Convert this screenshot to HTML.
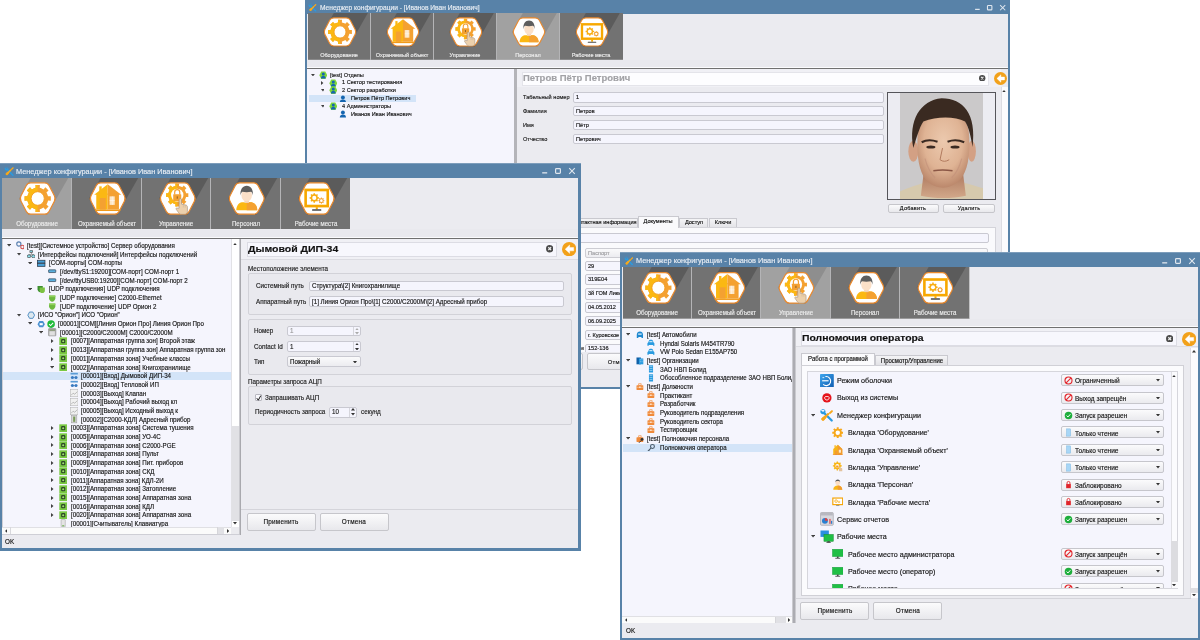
<!DOCTYPE html><html><head><meta charset="utf-8"><title>Менеджер конфигурации</title><style>
*{margin:0;padding:0;box-sizing:border-box}
html,body{width:1200px;height:640px;overflow:hidden;background:#fff}
body{position:relative;font-family:"Liberation Sans", sans-serif}
.t{position:absolute;white-space:nowrap;font-family:"Liberation Sans", sans-serif;-webkit-text-stroke:0.15px currentColor}
.r{position:absolute;display:block}
.win{position:absolute;overflow:hidden}
.fld{position:absolute;background:#f5f5fd;border:1px solid #cbcbd3;border-radius:2px}
.btn{position:absolute;background:linear-gradient(#fbfbfb,#e9e9ec);border:1px solid #c4c4c8;border-radius:2px}
</style></head><body><div id="root" style="position:absolute;left:0;top:0;width:1200px;height:640px;overflow:hidden;will-change:transform;background:#fff"><div class="r" style="left:305px;top:-1px;width:705.3px;height:390px;background:#5882a8;"></div><div class="r" style="left:305px;top:-1px;width:705.3px;height:1px;background:#7d9dbb;"></div><div class="r" style="left:307.3px;top:13.5px;width:700.7px;height:373.2px;background:#ebebf0;"></div><svg class="r" style="left:308.3px;top:3.3px;" width="8.6" height="8.6" viewBox="0 0 12 12" preserveAspectRatio="none"><path d="M2.5,10.5 c-0.8,-0.8 -0.6,-1.6 0.2,-2.2 l5.2,-4.2 l1,1 l-4.2,5.2 c-0.6,0.8 -1.4,1 -2.2,0.2z" fill="#f7a81b"/><path d="M8,4 l2.2,-2.2 c0.4,-0.4 1,-0.3 1.3,0.1 c0.3,0.4 0.2,0.9 -0.2,1.2 l-2.2,2 z" fill="#f7a81b"/><path d="M1.5,1.5 c1,-0.6 2.3,-0.5 3.1,0.3 c0.7,0.7 0.9,1.6 0.6,2.4 l6.2,6.2 c0.4,0.4 0.4,1 0,1.3 c-0.4,0.4 -1,0.4 -1.3,0 l-6.2,-6.2 c-0.8,0.3 -1.8,0.1 -2.4,-0.6 c-0.8,-0.8 -0.9,-2.1 -0.3,-3.1 l1.6,1.6 l1.2,-0.3 l0.3,-1.2 z" fill="#2a9be0"/><path d="M2.5,10.5 c-0.8,-0.8 -0.6,-1.6 0.2,-2.2 l5.2,-4.2 l1,1 l-4.2,5.2 c-0.6,0.8 -1.4,1 -2.2,0.2z" fill="#f7a81b"/></svg><div class="t" style="left:319.7px;top:4.11px;font-size:7.126px;line-height:9.32px;color:#e9eef4;transform:scaleX(0.9346);transform-origin:0 50%;">Менеджер конфигурации - [Иванов Иван Иванович]</div><svg class="r" style="left:999.12px;top:4.22px;" width="7.36" height="7.36" viewBox="0 0 8 8" preserveAspectRatio="none"><path d="M1.2,1.2 L6.8,6.8 M6.8,1.2 L1.2,6.8" stroke="#dfe6ee" stroke-width="1.1"/></svg><svg class="r" style="left:986.24px;top:4.22px;" width="7.36" height="7.36" viewBox="0 0 8 8" preserveAspectRatio="none"><rect x="1.6" y="1.6" width="4.8" height="4.8" rx="0.8" fill="none" stroke="#dfe6ee" stroke-width="1.2"/></svg><svg class="r" style="left:974.28px;top:4.22px;" width="7.36" height="7.36" viewBox="0 0 8 8" preserveAspectRatio="none"><rect x="1.2" y="5.2" width="5" height="1.3" fill="#dfe6ee"/></svg><div class="r" style="left:307.5px;top:13.3px;width:315.0px;height:46.7px;background:#c2c2c4;"></div><svg class="r" style="left:307.5px;top:13.3px;overflow:hidden" width="63.0" height="46.7" viewBox="0 0 63.0 46.7" preserveAspectRatio="none"><rect width="63.0" height="46.7" fill="#727272"/><polygon points="15.0,18.95 95.0,-121.05 103.5,-135.8 120.5,-135.8 129.0,-121.05 49.0,18.95 40.5,33.7 23.5,33.7" fill="#5b5b5b"/><g transform="translate(15.0,4.2) scale(0.85,0.8676)"><path d="M2.21,19.82 Q0.70,17.00 2.21,14.18 L7.89,3.62 Q9.40,0.80 12.60,0.80 L27.40,0.80 Q30.60,0.80 32.11,3.62 L37.79,14.18 Q39.30,17.00 37.79,19.82 L32.11,30.38 Q30.60,33.20 27.40,33.20 L12.60,33.20 Q9.40,33.20 7.89,30.38 Z" fill="#fff" stroke="#ea8a2e" stroke-width="1.3"/><clipPath id="ga0l"><rect x="0" y="0" width="20" height="34"/></clipPath><path d="M30.7,13.71 L30.98,14.81 L34.0,14.64 L34.0,19.36 L30.98,19.19 L30.7,20.29 L29.9,22.24 L29.31,23.22 L31.57,25.23 L28.23,28.57 L26.22,26.31 L25.24,26.9 L23.29,27.7 L22.19,27.98 L22.36,31.0 L17.64,31.0 L17.81,27.98 L16.71,27.7 L14.76,26.9 L13.78,26.31 L11.77,28.57 L8.43,25.23 L10.69,23.22 L10.1,22.24 L9.3,20.29 L9.02,19.19 L6.0,19.36 L6.0,14.64 L9.02,14.81 L9.3,13.71 L10.1,11.76 L10.69,10.78 L8.43,8.77 L11.77,5.43 L13.78,7.69 L14.76,7.1 L16.71,6.3 L17.81,6.02 L17.64,3.0 L22.36,3.0 L22.19,6.02 L23.29,6.3 L25.24,7.1 L26.22,7.69 L28.23,5.43 L31.57,8.77 L29.31,10.78 L29.9,11.76Z" fill="#f4a131"/><path d="M30.7,13.71 L30.98,14.81 L34.0,14.64 L34.0,19.36 L30.98,19.19 L30.7,20.29 L29.9,22.24 L29.31,23.22 L31.57,25.23 L28.23,28.57 L26.22,26.31 L25.24,26.9 L23.29,27.7 L22.19,27.98 L22.36,31.0 L17.64,31.0 L17.81,27.98 L16.71,27.7 L14.76,26.9 L13.78,26.31 L11.77,28.57 L8.43,25.23 L10.69,23.22 L10.1,22.24 L9.3,20.29 L9.02,19.19 L6.0,19.36 L6.0,14.64 L9.02,14.81 L9.3,13.71 L10.1,11.76 L10.69,10.78 L8.43,8.77 L11.77,5.43 L13.78,7.69 L14.76,7.1 L16.71,6.3 L17.81,6.02 L17.64,3.0 L22.36,3.0 L22.19,6.02 L23.29,6.3 L25.24,7.1 L26.22,7.69 L28.23,5.43 L31.57,8.77 L29.31,10.78 L29.9,11.76Z" fill="#fbb813" clip-path="url(#ga0l)"/><circle cx="20" cy="17" r="7" fill="#fff" stroke="#f29a1a" stroke-width="0.9"/></g></svg><div class="t" style="left:139.0px;width:400px;text-align:center;top:51.87px;font-size:5.661px;line-height:7.77px;color:#ececec;transform:scaleX(0.9804);transform-origin:50% 50%;">Оборудование</div><svg class="r" style="left:370.5px;top:13.3px;overflow:hidden" width="63.0" height="46.7" viewBox="0 0 63.0 46.7" preserveAspectRatio="none"><rect width="63.0" height="46.7" fill="#727272"/><polygon points="15.0,18.95 95.0,-121.05 103.5,-135.8 120.5,-135.8 129.0,-121.05 49.0,18.95 40.5,33.7 23.5,33.7" fill="#5b5b5b"/><g transform="translate(15.0,4.2) scale(0.85,0.8676)"><path d="M2.21,19.82 Q0.70,17.00 2.21,14.18 L7.89,3.62 Q9.40,0.80 12.60,0.80 L27.40,0.80 Q30.60,0.80 32.11,3.62 L37.79,14.18 Q39.30,17.00 37.79,19.82 L32.11,30.38 Q30.60,33.20 27.40,33.20 L12.60,33.20 Q9.40,33.20 7.89,30.38 Z" fill="#fff" stroke="#ea8a2e" stroke-width="1.3"/><polygon points="5.5,13.2 20,2.3 20,13.2" fill="#fbb813"/><polygon points="20,2.3 34.5,13.2 20,13.2" fill="#f4a131"/><rect x="11" y="4.5" width="2.6" height="6" fill="#fbb813"/><rect x="7.8" y="12" width="12.2" height="16.3" fill="#fbb813"/><rect x="20" y="12" width="12" height="16.3" fill="#f4a131"/><rect x="11.6" y="16.5" width="6.4" height="11.8" fill="#f4a131"/><rect x="22" y="14.8" width="5.5" height="8.8" fill="#fde6c4"/><rect x="24.5" y="14.8" width="0.5" height="8.8" fill="#fff"/><rect x="22" y="19" width="5.5" height="0.5" fill="#fff"/><rect x="6.5" y="28.3" width="27" height="1.6" fill="#f29a1a"/></g></svg><div class="t" style="left:202.0px;width:400px;text-align:center;top:51.87px;font-size:5.661px;line-height:7.77px;color:#ececec;transform:scaleX(0.9804);transform-origin:50% 50%;">Охраняемый объект</div><svg class="r" style="left:433.5px;top:13.3px;overflow:hidden" width="63.0" height="46.7" viewBox="0 0 63.0 46.7" preserveAspectRatio="none"><rect width="63.0" height="46.7" fill="#727272"/><polygon points="15.0,18.95 95.0,-121.05 103.5,-135.8 120.5,-135.8 129.0,-121.05 49.0,18.95 40.5,33.7 23.5,33.7" fill="#5b5b5b"/><g transform="translate(15.0,4.2) scale(0.85,0.8676)"><path d="M2.21,19.82 Q0.70,17.00 2.21,14.18 L7.89,3.62 Q9.40,0.80 12.60,0.80 L27.40,0.80 Q30.60,0.80 32.11,3.62 L37.79,14.18 Q39.30,17.00 37.79,19.82 L32.11,30.38 Q30.60,33.20 27.40,33.20 L12.60,33.20 Q9.40,33.20 7.89,30.38 Z" fill="#fff" stroke="#ea8a2e" stroke-width="1.3"/><clipPath id="ga2c"><rect x="0" y="0" width="19.5" height="34"/></clipPath><path d="M28.68,10.68 L28.92,11.63 L31.33,11.51 L31.33,15.49 L28.92,15.37 L28.68,16.32 L27.98,17.99 L27.48,18.83 L29.28,20.46 L26.46,23.28 L24.83,21.48 L23.99,21.98 L22.32,22.68 L21.37,22.92 L21.49,25.33 L17.51,25.33 L17.63,22.92 L16.68,22.68 L15.01,21.98 L14.17,21.48 L12.54,23.28 L9.72,20.46 L11.52,18.83 L11.02,17.99 L10.32,16.32 L10.08,15.37 L7.67,15.49 L7.67,11.51 L10.08,11.63 L10.32,10.68 L11.02,9.01 L11.52,8.17 L9.72,6.54 L12.54,3.72 L14.17,5.52 L15.01,5.02 L16.68,4.32 L17.63,4.08 L17.51,1.67 L21.49,1.67 L21.37,4.08 L22.32,4.32 L23.99,5.02 L24.83,5.52 L26.46,3.72 L29.28,6.54 L27.48,8.17 L27.98,9.01Z" fill="#f4a131"/><path d="M28.68,10.68 L28.92,11.63 L31.33,11.51 L31.33,15.49 L28.92,15.37 L28.68,16.32 L27.98,17.99 L27.48,18.83 L29.28,20.46 L26.46,23.28 L24.83,21.48 L23.99,21.98 L22.32,22.68 L21.37,22.92 L21.49,25.33 L17.51,25.33 L17.63,22.92 L16.68,22.68 L15.01,21.98 L14.17,21.48 L12.54,23.28 L9.72,20.46 L11.52,18.83 L11.02,17.99 L10.32,16.32 L10.08,15.37 L7.67,15.49 L7.67,11.51 L10.08,11.63 L10.32,10.68 L11.02,9.01 L11.52,8.17 L9.72,6.54 L12.54,3.72 L14.17,5.52 L15.01,5.02 L16.68,4.32 L17.63,4.08 L17.51,1.67 L21.49,1.67 L21.37,4.08 L22.32,4.32 L23.99,5.02 L24.83,5.52 L26.46,3.72 L29.28,6.54 L27.48,8.17 L27.98,9.01Z" fill="#fbb813" clip-path="url(#ga2c)"/><circle cx="19.5" cy="13.5" r="6.6" fill="#fff"/><path d="M16.8,13 v-2.4 a2.7,2.7 0 0 1 5.4,0 v2.4" fill="none" stroke="#f4a131" stroke-width="1.3"/><rect x="15.2" y="12.6" width="8.6" height="7" rx="0.6" fill="#f4a131"/><rect x="19" y="14.8" width="1" height="2.4" fill="#8a5a20"/><path d="M21.5,27 v-8.6 a1.3,1.3 0 0 1 2.6,0 v4.4 l4.5,0.9 c1.2,0.3 1.8,1 1.8,2.3 v4 c0,2 -1.2,3.3 -3.3,3.3 h-3.3 c-1.3,0 -2.1,-0.6 -2.8,-1.6 l-2.6,-3.6 c-0.6,-0.9 0.4,-1.8 1.3,-1.2 z" fill="#ecd0ac" stroke="#9a8a7a" stroke-width="0.6"/><path d="M26,23.2 v3 M28,23.8 v2.6" stroke="#c8ac8a" stroke-width="0.5"/></g></svg><div class="t" style="left:265.0px;width:400px;text-align:center;top:51.87px;font-size:5.661px;line-height:7.77px;color:#ececec;transform:scaleX(0.9804);transform-origin:50% 50%;">Управление</div><svg class="r" style="left:496.5px;top:13.3px;overflow:hidden" width="63.0" height="46.7" viewBox="0 0 63.0 46.7" preserveAspectRatio="none"><rect width="63.0" height="46.7" fill="#a1a1a1"/><polygon points="15.0,18.95 95.0,-121.05 103.5,-135.8 120.5,-135.8 129.0,-121.05 49.0,18.95 40.5,33.7 23.5,33.7" fill="#8e8e8e"/><g transform="translate(15.0,4.2) scale(0.85,0.8676)"><path d="M2.21,19.82 Q0.70,17.00 2.21,14.18 L7.89,3.62 Q9.40,0.80 12.60,0.80 L27.40,0.80 Q30.60,0.80 32.11,3.62 L37.79,14.18 Q39.30,17.00 37.79,19.82 L32.11,30.38 Q30.60,33.20 27.40,33.20 L12.60,33.20 Q9.40,33.20 7.89,30.38 Z" fill="#fff" stroke="#ea8a2e" stroke-width="1.3"/><path d="M8.9,29 c0,-4.6 2.6,-7.6 6,-8.2 h10.2 c3.4,0.6 6.2,3.6 6.2,8.2 z" fill="#fbb813"/><path d="M20,20.8 h5.1 c3.4,0.6 6.2,3.6 6.2,8.2 h-11.3 z" fill="#f4a131"/><rect x="17.6" y="18" width="4.8" height="3.6" fill="#f3d2b2"/><ellipse cx="20" cy="13.6" rx="5.6" ry="6.6" fill="#fbe0c8"/><path d="M13.4,13.8 c-0.6,-6.4 2.4,-10 6.6,-10 c4.2,0 7.2,3.6 6.6,10 c-0.4,-2.2 -1,-3.4 -2,-3.8 c-2.6,0.6 -6.6,0.6 -9.2,0 c-1,0.4 -1.6,1.6 -2,3.8 z" fill="#5e5e5e"/></g></svg><div class="t" style="left:328.0px;width:400px;text-align:center;top:51.87px;font-size:5.661px;line-height:7.77px;color:#ececec;transform:scaleX(0.9804);transform-origin:50% 50%;">Персонал</div><svg class="r" style="left:559.5px;top:13.3px;overflow:hidden" width="63.0" height="46.7" viewBox="0 0 63.0 46.7" preserveAspectRatio="none"><rect width="63.0" height="46.7" fill="#727272"/><polygon points="15.0,18.95 95.0,-121.05 103.5,-135.8 120.5,-135.8 129.0,-121.05 49.0,18.95 40.5,33.7 23.5,33.7" fill="#5b5b5b"/><g transform="translate(15.0,4.2) scale(0.85,0.8676)"><path d="M2.21,19.82 Q0.70,17.00 2.21,14.18 L7.89,3.62 Q9.40,0.80 12.60,0.80 L27.40,0.80 Q30.60,0.80 32.11,3.62 L37.79,14.18 Q39.30,17.00 37.79,19.82 L32.11,30.38 Q30.60,33.20 27.40,33.20 L12.60,33.20 Q9.40,33.20 7.89,30.38 Z" fill="#fff" stroke="#ea8a2e" stroke-width="1.3"/><rect x="8.2" y="8.2" width="23.6" height="16.6" fill="#fff" stroke="#f7a800" stroke-width="2.8"/><path d="M21.13,15.25 L21.23,15.64 L22.33,15.57 L22.33,17.23 L21.23,17.16 L21.13,17.55 L20.85,18.22 L20.64,18.57 L21.47,19.3 L20.3,20.47 L19.57,19.64 L19.22,19.85 L18.55,20.13 L18.16,20.23 L18.23,21.33 L16.57,21.33 L16.64,20.23 L16.25,20.13 L15.58,19.85 L15.23,19.64 L14.5,20.47 L13.33,19.3 L14.16,18.57 L13.95,18.22 L13.67,17.55 L13.57,17.16 L12.47,17.23 L12.47,15.57 L13.57,15.64 L13.67,15.25 L13.95,14.58 L14.16,14.23 L13.33,13.5 L14.5,12.33 L15.23,13.16 L15.58,12.95 L16.25,12.67 L16.64,12.57 L16.57,11.47 L18.23,11.47 L18.16,12.57 L18.55,12.67 L19.22,12.95 L19.57,13.16 L20.3,12.33 L21.47,13.5 L20.64,14.23 L20.85,14.58Z" fill="#f9ad10"/><circle cx="17.4" cy="16.4" r="2.2" fill="#fff"/><path d="M27.39,18.46 L27.45,18.71 L28.16,18.67 L28.16,19.73 L27.45,19.69 L27.39,19.94 L27.21,20.37 L27.08,20.59 L27.61,21.06 L26.86,21.81 L26.39,21.28 L26.17,21.41 L25.74,21.59 L25.49,21.65 L25.53,22.36 L24.47,22.36 L24.51,21.65 L24.26,21.59 L23.83,21.41 L23.61,21.28 L23.14,21.81 L22.39,21.06 L22.92,20.59 L22.79,20.37 L22.61,19.94 L22.55,19.69 L21.84,19.73 L21.84,18.67 L22.55,18.71 L22.61,18.46 L22.79,18.03 L22.92,17.81 L22.39,17.34 L23.14,16.59 L23.61,17.12 L23.83,16.99 L24.26,16.81 L24.51,16.75 L24.47,16.04 L25.53,16.04 L25.49,16.75 L25.74,16.81 L26.17,16.99 L26.39,17.12 L26.86,16.59 L27.61,17.34 L27.08,17.81 L27.21,18.03Z" fill="#f4a131"/><circle cx="25" cy="19.2" r="1.4" fill="#fff"/><rect x="19" y="26" width="2.2" height="2.2" fill="#f7a800"/><rect x="15" y="28.2" width="10" height="1.4" rx="0.5" fill="#4a4a4a"/></g></svg><div class="t" style="left:391.0px;width:400px;text-align:center;top:51.87px;font-size:5.661px;line-height:7.77px;color:#ececec;transform:scaleX(0.9804);transform-origin:50% 50%;">Рабочие места</div><div class="r" style="left:369.5px;top:13.3px;width:1.0px;height:46.7px;background:#b4b4b6;"></div><div class="r" style="left:432.5px;top:13.3px;width:1.0px;height:46.7px;background:#b4b4b6;"></div><div class="r" style="left:495.5px;top:13.3px;width:1.0px;height:46.7px;background:#b4b4b6;"></div><div class="r" style="left:558.5px;top:13.3px;width:1.0px;height:46.7px;background:#b4b4b6;"></div><div class="r" style="left:307.3px;top:60px;width:700.5px;height:8px;background:#e9e9ee;border-bottom:1px solid #fbfbfd;"></div><div class="r" style="left:307.3px;top:68px;width:700.5px;height:1px;background:#707070;"></div><div class="r" style="left:307.3px;top:69px;width:206.7px;height:319px;background:#f5f5fd;"></div><div class="r" style="left:309px;top:94.6px;width:106.7px;height:7.6px;background:#d3e4f8;"></div><svg class="r" style="left:310.66px;top:73.65px;" width="3.89" height="2.69" viewBox="0 0 5.2 3.6" preserveAspectRatio="none"><polygon points="0,0 5.2,0 2.6,3.2" fill="#404040"/></svg><svg class="r" style="left:318.5px;top:70.7px;" width="8.6" height="8.6" viewBox="0 0 8 8" preserveAspectRatio="none"><polygon points="0.3,4 2.1,0.5 5.9,0.5 7.7,4 5.9,7.5 2.1,7.5" fill="#7ed63a"/><circle cx="4" cy="2.9" r="1.4" fill="#1565b0"/><path d="M1.8,7 c0,-1.8 1,-2.6 2.2,-2.6 c1.2,0 2.2,0.8 2.2,2.6z" fill="#1565b0"/></svg><div class="t" style="left:330.0px;top:71.64px;font-size:5.712px;line-height:7.84px;color:#141414;transform:scaleX(0.9804);transform-origin:0 50%;">[test] Отделы</div><svg class="r" style="left:321.3px;top:80.86px;" width="2.69" height="3.89" viewBox="0 0 3.6 5.2" preserveAspectRatio="none"><polygon points="0,0 3.2,2.6 0,5.2" fill="#404040"/></svg><svg class="r" style="left:328.7px;top:78.5px;" width="8.6" height="8.6" viewBox="0 0 8 8" preserveAspectRatio="none"><polygon points="0.3,4 2.1,0.5 5.9,0.5 7.7,4 5.9,7.5 2.1,7.5" fill="#7ed63a"/><circle cx="4" cy="2.9" r="1.4" fill="#1565b0"/><path d="M1.8,7 c0,-1.8 1,-2.6 2.2,-2.6 c1.2,0 2.2,0.8 2.2,2.6z" fill="#1565b0"/></svg><div class="t" style="left:341.5px;top:79.44px;font-size:5.712px;line-height:7.84px;color:#141414;transform:scaleX(0.9804);transform-origin:0 50%;">1 Сектор тестирования</div><svg class="r" style="left:320.56px;top:89.25px;" width="3.89" height="2.69" viewBox="0 0 5.2 3.6" preserveAspectRatio="none"><polygon points="0,0 5.2,0 2.6,3.2" fill="#404040"/></svg><svg class="r" style="left:328.7px;top:86.3px;" width="8.6" height="8.6" viewBox="0 0 8 8" preserveAspectRatio="none"><polygon points="0.3,4 2.1,0.5 5.9,0.5 7.7,4 5.9,7.5 2.1,7.5" fill="#7ed63a"/><circle cx="4" cy="2.9" r="1.4" fill="#1565b0"/><path d="M1.8,7 c0,-1.8 1,-2.6 2.2,-2.6 c1.2,0 2.2,0.8 2.2,2.6z" fill="#1565b0"/></svg><div class="t" style="left:341.5px;top:87.24px;font-size:5.712px;line-height:7.84px;color:#141414;transform:scaleX(0.9804);transform-origin:0 50%;">2 Сектор разработки</div><svg class="r" style="left:338.7px;top:94.5px;" width="7.8" height="7.8" viewBox="0 0 8 8" preserveAspectRatio="none"><circle cx="4" cy="2.5" r="2" fill="#1565b0"/><path d="M0.8,7.8 c0,-2.4 1.4,-3.2 3.2,-3.2 c1.8,0 3.2,0.8 3.2,3.2z" fill="#1565b0"/></svg><div class="t" style="left:351.2px;top:95.04px;font-size:5.712px;line-height:7.84px;color:#141414;transform:scaleX(0.9804);transform-origin:0 50%;">Петров Пётр Петрович</div><svg class="r" style="left:320.56px;top:104.85px;" width="3.89" height="2.69" viewBox="0 0 5.2 3.6" preserveAspectRatio="none"><polygon points="0,0 5.2,0 2.6,3.2" fill="#404040"/></svg><svg class="r" style="left:328.7px;top:101.9px;" width="8.6" height="8.6" viewBox="0 0 8 8" preserveAspectRatio="none"><polygon points="0.3,4 2.1,0.5 5.9,0.5 7.7,4 5.9,7.5 2.1,7.5" fill="#7ed63a"/><circle cx="4" cy="2.9" r="1.4" fill="#1565b0"/><path d="M1.8,7 c0,-1.8 1,-2.6 2.2,-2.6 c1.2,0 2.2,0.8 2.2,2.6z" fill="#1565b0"/></svg><div class="t" style="left:341.5px;top:102.84px;font-size:5.712px;line-height:7.84px;color:#141414;transform:scaleX(0.9804);transform-origin:0 50%;">4 Администраторы</div><svg class="r" style="left:338.7px;top:110.1px;" width="7.8" height="7.8" viewBox="0 0 8 8" preserveAspectRatio="none"><circle cx="4" cy="2.5" r="2" fill="#1565b0"/><path d="M0.8,7.8 c0,-2.4 1.4,-3.2 3.2,-3.2 c1.8,0 3.2,0.8 3.2,3.2z" fill="#1565b0"/></svg><div class="t" style="left:351.2px;top:110.64px;font-size:5.712px;line-height:7.84px;color:#141414;transform:scaleX(0.9804);transform-origin:0 50%;">Иванов Иван Иванович</div><div class="r" style="left:514px;top:69px;width:2.6px;height:319px;background:#b4b4b9;"></div><div class="r" style="left:516.6px;top:69px;width:491.2px;height:317px;background:#ebebf0;"></div><div class="r" style="left:516.6px;top:69px;width:484.0px;height:18px;background:#f0f0f5;"></div><div class="r" style="left:521.5px;top:71.5px;width:467.5px;height:14.0px;background:#fdfdff;border:1px solid #e4e4ea;"></div><div class="t" style="left:522.8px;top:72.1px;font-size:9.025px;line-height:13.3px;color:#a2a2a6;font-weight:bold;transform:scaleX(1.0526);transform-origin:0 50%;">Петров Пётр Петрович</div><svg class="r" style="left:979.4px;top:74.8px;" width="6.4" height="6.4" viewBox="0 0 10 10" preserveAspectRatio="none"><circle cx="5" cy="5" r="5" fill="#4a4a4a"/><path d="M3.1,3.1 L6.9,6.9 M6.9,3.1 L3.1,6.9" stroke="#f0f0f0" stroke-width="1.6"/></svg><svg class="r" style="left:993.5px;top:71.5px;" width="13.0" height="13.0" viewBox="0 0 20 20" preserveAspectRatio="none"><circle cx="10" cy="10" r="10" fill="#f2a11a"/><path d="M10.6,4.2 L4.4,10 L10.6,15.8 L10.6,12.3 L16.2,12.3 L16.2,7.7 L10.6,7.7 Z" fill="#fff" stroke="#fff" stroke-width="0.6" stroke-linejoin="round"/></svg><div class="r" style="left:1000.6px;top:87.4px;width:7.2px;height:298.6px;background:#fbfbfd;border-left:1px solid #dcdce2;"></div><svg class="r" style="left:1002.2px;top:90px;" width="4" height="2.4" viewBox="0 0 4 2.4" preserveAspectRatio="none"><polygon points="0,2.4 4,2.4 2,0" fill="#333"/></svg><div class="t" style="left:522.5px;top:94.14px;font-size:5.712px;line-height:7.84px;color:#1c1c1c;transform:scaleX(0.9804);transform-origin:0 50%;">Табельный номер</div><div class="r" style="left:573px;top:92.1px;width:310.5px;height:10.6px;background:#f5f5fd;border:1px solid #c9c9d1;border-radius:2px;"></div><div class="t" style="left:576px;top:94.04px;font-size:5.712px;line-height:7.84px;color:#141414;transform:scaleX(0.9804);transform-origin:0 50%;">1</div><div class="t" style="left:522.5px;top:107.94px;font-size:5.712px;line-height:7.84px;color:#1c1c1c;transform:scaleX(0.9804);transform-origin:0 50%;">Фамилия</div><div class="r" style="left:573px;top:105.9px;width:310.5px;height:10.6px;background:#f5f5fd;border:1px solid #c9c9d1;border-radius:2px;"></div><div class="t" style="left:576px;top:107.84px;font-size:5.712px;line-height:7.84px;color:#141414;transform:scaleX(0.9804);transform-origin:0 50%;">Петров</div><div class="t" style="left:522.5px;top:121.84px;font-size:5.712px;line-height:7.84px;color:#1c1c1c;transform:scaleX(0.9804);transform-origin:0 50%;">Имя</div><div class="r" style="left:573px;top:119.8px;width:310.5px;height:10.6px;background:#f5f5fd;border:1px solid #c9c9d1;border-radius:2px;"></div><div class="t" style="left:576px;top:121.74px;font-size:5.712px;line-height:7.84px;color:#141414;transform:scaleX(0.9804);transform-origin:0 50%;">Пётр</div><div class="t" style="left:522.5px;top:135.74px;font-size:5.712px;line-height:7.84px;color:#1c1c1c;transform:scaleX(0.9804);transform-origin:0 50%;">Отчество</div><div class="r" style="left:573px;top:133.7px;width:310.5px;height:10.6px;background:#f5f5fd;border:1px solid #c9c9d1;border-radius:2px;"></div><div class="t" style="left:576px;top:135.64px;font-size:5.712px;line-height:7.84px;color:#141414;transform:scaleX(0.9804);transform-origin:0 50%;">Петрович</div><div class="r" style="left:887.3px;top:92.4px;width:108.5px;height:107.9px;background:#ececf2;border:1px solid #55555a;"></div><svg class="r" style="left:899.8px;top:93.4px;" width="83.4" height="105.9" viewBox="0 0 83.40000000000009 105.9" preserveAspectRatio="none"><defs><radialGradient id="fg" cx="50%" cy="40%" r="62%"><stop offset="0" stop-color="#ecc9ae"/><stop offset="0.6" stop-color="#dfb394"/><stop offset="1" stop-color="#b88468"/></radialGradient><linearGradient id="nk" x1="0" y1="0" x2="0" y2="1"><stop offset="0" stop-color="#a87258"/><stop offset="1" stop-color="#d2a88a"/></linearGradient></defs><rect width="83.40000000000009" height="105.9" fill="#cbc9ca"/><path d="M0,105.9 L0,98.49 C8.34,94.25 18.35,92.13 25.02,88.96 L61.72,88.96 C68.39,91.07 76.73,93.19 83.40000000000009,95.31 L83.40000000000009,105.9 Z" fill="#d6c9ad"/><path d="M24.19,76.25 L62.55,76.25 L65.89,102.72 C51.71,105.9 35.03,105.9 20.85,102.72 Z" fill="url(#nk)"/><ellipse cx="13.34" cy="58.25" rx="5.0" ry="10.59" fill="#d3a084"/><ellipse cx="71.72" cy="58.25" rx="4.17" ry="10.59" fill="#d3a084"/><path d="M17.51,44.48 C17.51,25.42 28.36,16.94 43.37,16.94 C58.38,16.94 69.22,25.42 69.22,44.48 C70.06,63.54 67.55,78.37 60.05,86.84 C53.38,93.19 48.37,94.78 43.37,94.78 C37.53,94.78 31.69,93.19 25.85,86.84 C19.18,78.37 16.68,63.54 17.51,44.48 Z" fill="url(#fg)"/><path d="M13.34,55.07 C8.34,27.53 20.02,7.41 41.7,5.3 C63.38,5.3 76.73,21.18 72.56,54.01 C70.89,44.48 69.22,34.95 65.05,28.59 C55.04,23.3 36.7,23.3 23.35,28.59 C19.18,34.95 16.68,44.48 13.34,55.07 Z" fill="#3a2a21"/><path d="M21.68,49.24 Q28.36,45.54 37.53,48.71" stroke="#3a2a22" stroke-width="2.2" fill="none"/><path d="M47.54,48.71 Q55.88,45.54 64.22,49.24" stroke="#3a2a22" stroke-width="2.2" fill="none"/><ellipse cx="30.86" cy="54.01" rx="4.59" ry="1.59" fill="#3a2a22"/><ellipse cx="55.04" cy="54.01" rx="4.59" ry="1.59" fill="#3a2a22"/><path d="M42.53,55.07 L40.03,66.72 Q44.2,69.89 49.21,66.72" stroke="#b27a5e" stroke-width="1" fill="none"/><path d="M33.36,77.84 Q42.53,76.25 52.54,77.84" stroke="#8a5645" stroke-width="1.5" fill="none"/><path d="M25.02,65.66 Q28.36,78.37 35.03,84.72" stroke="#c2907a" stroke-width="1.2" fill="none" opacity="0.6"/><path d="M61.72,65.66 Q58.38,78.37 51.71,84.72" stroke="#c2907a" stroke-width="1.2" fill="none" opacity="0.6"/></svg><div class="r" style="left:887.5px;top:204.4px;width:51.9px;height:8.6px;background:linear-gradient(#fbfbfc,#e8e8ec);border:1px solid #c6c6cb;border-radius:2px;"></div><div class="t" style="left:713.45px;width:400px;text-align:center;top:205.4px;font-size:5.61px;line-height:7.7px;color:#141414;letter-spacing:0.25px;transform:scaleX(0.9804);transform-origin:50% 50%;">Добавить</div><div class="r" style="left:942.5px;top:204.4px;width:52.5px;height:8.6px;background:linear-gradient(#fbfbfc,#e8e8ec);border:1px solid #c6c6cb;border-radius:2px;"></div><div class="t" style="left:768.75px;width:400px;text-align:center;top:205.4px;font-size:5.61px;line-height:7.7px;color:#141414;letter-spacing:0.25px;transform:scaleX(0.9804);transform-origin:50% 50%;">Удалить</div><div class="r" style="left:516.6px;top:226.5px;width:479.0px;height:159.5px;background:#fafafc;border:1px solid #d4d4da;"></div><div class="r" style="left:540px;top:217.7px;width:97.5px;height:9.3px;background:linear-gradient(#f4f4f6,#e4e4e8);border:1px solid #c9c9cf;border-bottom:none;"></div><div class="t" style="right:563px;top:218.94px;font-size:5.712px;line-height:7.84px;color:#141414;transform:scaleX(0.9804);transform-origin:100% 50%;">Контактная информация</div><div class="r" style="left:638px;top:216px;width:40.5px;height:11.5px;background:#fafafc;border:1px solid #c9c9cf;border-bottom:none;"></div><div class="t" style="left:458.2px;width:400px;text-align:center;top:218.44px;font-size:5.712px;line-height:7.84px;color:#111;transform:scaleX(0.9804);transform-origin:50% 50%;">Документы</div><div class="r" style="left:679px;top:217.7px;width:29.3px;height:9.3px;background:linear-gradient(#f4f4f6,#e4e4e8);border:1px solid #c9c9cf;border-bottom:none;"></div><div class="t" style="left:493.6px;width:400px;text-align:center;top:219.04px;font-size:5.712px;line-height:7.84px;color:#141414;transform:scaleX(0.9804);transform-origin:50% 50%;">Доступ</div><div class="r" style="left:709px;top:217.7px;width:28.3px;height:9.3px;background:linear-gradient(#f4f4f6,#e4e4e8);border:1px solid #c9c9cf;border-bottom:none;"></div><div class="t" style="left:523.2px;width:400px;text-align:center;top:219.04px;font-size:5.712px;line-height:7.84px;color:#141414;transform:scaleX(0.9804);transform-origin:50% 50%;">Ключи</div><div class="r" style="left:560px;top:232.7px;width:428.5px;height:10.3px;background:#f5f5fd;border:1px solid #c9c9d1;border-radius:2px;"></div><div class="r" style="left:584.7px;top:247.7px;width:403.8px;height:10.3px;background:linear-gradient(#fafafb,#ececf0);border:1px solid #cdcdd3;border-radius:2px;"></div><div class="t" style="left:587.5px;top:249.64px;font-size:5.712px;line-height:7.84px;color:#a0a0a4;transform:scaleX(0.9804);transform-origin:0 50%;">Паспорт</div><svg class="r" style="left:982.8px;top:251.5px;" width="3.6" height="2.4" viewBox="0 0 3.6 2.4" preserveAspectRatio="none"><polygon points="0,0 3.6,0 1.8,2.4" fill="#333"/></svg><div class="r" style="left:584.7px;top:260.6px;width:315.3px;height:10.8px;background:#f5f5fd;border:1px solid #c9c9d1;border-radius:2px;"></div><div class="t" style="left:587.7px;top:262.64px;font-size:5.712px;line-height:7.84px;color:#141414;transform:scaleX(0.9804);transform-origin:0 50%;">29</div><div class="r" style="left:584.7px;top:274.2px;width:315.3px;height:11.3px;background:#f5f5fd;border:1px solid #c9c9d1;border-radius:2px;"></div><div class="t" style="left:587.7px;top:276.49px;font-size:5.712px;line-height:7.84px;color:#141414;transform:scaleX(0.9804);transform-origin:0 50%;">319Е04</div><div class="r" style="left:584.7px;top:288px;width:315.3px;height:11.5px;background:#f5f5fd;border:1px solid #c9c9d1;border-radius:2px;"></div><div class="t" style="left:587.7px;top:290.39px;font-size:5.712px;line-height:7.84px;color:#141414;transform:scaleX(0.9804);transform-origin:0 50%;">3й ГОМ Ликино</div><div class="r" style="left:584.7px;top:302.3px;width:315.3px;height:10.7px;background:#f5f5fd;border:1px solid #c9c9d1;border-radius:2px;"></div><div class="t" style="left:587.7px;top:304.29px;font-size:5.712px;line-height:7.84px;color:#141414;transform:scaleX(0.9804);transform-origin:0 50%;">04.05.2012</div><div class="r" style="left:584.7px;top:316.2px;width:315.3px;height:10.2px;background:#f5f5fd;border:1px solid #c9c9d1;border-radius:2px;"></div><div class="t" style="left:587.7px;top:317.94px;font-size:5.712px;line-height:7.84px;color:#141414;transform:scaleX(0.9804);transform-origin:0 50%;">06.09.2025</div><div class="r" style="left:584.7px;top:330px;width:315.3px;height:10.4px;background:#f5f5fd;border:1px solid #c9c9d1;border-radius:2px;"></div><div class="t" style="left:587.7px;top:331.84px;font-size:5.712px;line-height:7.84px;color:#141414;transform:scaleX(0.9804);transform-origin:0 50%;">г. Куровское</div><div class="r" style="left:584.7px;top:343.5px;width:315.3px;height:10.5px;background:#f5f5fd;border:1px solid #c9c9d1;border-radius:2px;"></div><div class="t" style="left:587.7px;top:345.39px;font-size:5.712px;line-height:7.84px;color:#141414;transform:scaleX(0.9804);transform-origin:0 50%;">152-136</div><div class="t" style="left:580.2px;top:344.64px;font-size:5.712px;line-height:7.84px;color:#1c1c1c;transform:scaleX(0.9804);transform-origin:0 50%;">м</div><div class="r" style="left:516.6px;top:351.5px;width:479.0px;height:34.5px;background:#ebebf0;"></div><div class="r" style="left:520px;top:353px;width:63.2px;height:16.5px;background:linear-gradient(#fbfbfc,#e8e8ec);border:1px solid #c6c6cb;border-radius:2px;"></div><div class="t" style="left:351.6px;width:400px;text-align:center;top:357.77px;font-size:5.916px;line-height:8.12px;color:#141414;letter-spacing:0.25px;transform:scaleX(0.9804);transform-origin:50% 50%;">Применить</div><div class="r" style="left:587px;top:353px;width:63px;height:16.5px;background:linear-gradient(#fbfbfc,#e8e8ec);border:1px solid #c6c6cb;border-radius:2px;"></div><div class="t" style="left:418.5px;width:400px;text-align:center;top:357.77px;font-size:5.916px;line-height:8.12px;color:#141414;letter-spacing:0.25px;transform:scaleX(0.9804);transform-origin:50% 50%;">Отмена</div><div class="r" style="left:0px;top:163px;width:580.5px;height:387.5px;background:#5882a8;"></div><div class="r" style="left:0px;top:163px;width:580.5px;height:1px;background:#7d9dbb;"></div><div class="r" style="left:2.3px;top:178px;width:575.9px;height:370.2px;background:#ebebf0;"></div><svg class="r" style="left:4px;top:166px;" width="10" height="10" viewBox="0 0 12 12" preserveAspectRatio="none"><path d="M2.5,10.5 c-0.8,-0.8 -0.6,-1.6 0.2,-2.2 l5.2,-4.2 l1,1 l-4.2,5.2 c-0.6,0.8 -1.4,1 -2.2,0.2z" fill="#f7a81b"/><path d="M8,4 l2.2,-2.2 c0.4,-0.4 1,-0.3 1.3,0.1 c0.3,0.4 0.2,0.9 -0.2,1.2 l-2.2,2 z" fill="#f7a81b"/><path d="M1.5,1.5 c1,-0.6 2.3,-0.5 3.1,0.3 c0.7,0.7 0.9,1.6 0.6,2.4 l6.2,6.2 c0.4,0.4 0.4,1 0,1.3 c-0.4,0.4 -1,0.4 -1.3,0 l-6.2,-6.2 c-0.8,0.3 -1.8,0.1 -2.4,-0.6 c-0.8,-0.8 -0.9,-2.1 -0.3,-3.1 l1.6,1.6 l1.2,-0.3 l0.3,-1.2 z" fill="#2a9be0"/><path d="M2.5,10.5 c-0.8,-0.8 -0.6,-1.6 0.2,-2.2 l5.2,-4.2 l1,1 l-4.2,5.2 c-0.6,0.8 -1.4,1 -2.2,0.2z" fill="#f7a81b"/></svg><div class="t" style="left:16px;top:167.39px;font-size:7.865px;line-height:10.29px;color:#e9eef4;transform:scaleX(0.9346);transform-origin:0 50%;">Менеджер конфигурации - [Иванов Иван Иванович]</div><svg class="r" style="left:567.6px;top:167.3px;" width="8.0" height="8.0" viewBox="0 0 8 8" preserveAspectRatio="none"><path d="M1.2,1.2 L6.8,6.8 M6.8,1.2 L1.2,6.8" stroke="#dfe6ee" stroke-width="1.1"/></svg><svg class="r" style="left:553.6px;top:167.3px;" width="8.0" height="8.0" viewBox="0 0 8 8" preserveAspectRatio="none"><rect x="1.6" y="1.6" width="4.8" height="4.8" rx="0.8" fill="none" stroke="#dfe6ee" stroke-width="1.2"/></svg><svg class="r" style="left:540.6px;top:167.3px;" width="8.0" height="8.0" viewBox="0 0 8 8" preserveAspectRatio="none"><rect x="1.2" y="5.2" width="5" height="1.3" fill="#dfe6ee"/></svg><div class="r" style="left:2.3px;top:178px;width:348.0px;height:51.4px;background:#c2c2c4;"></div><svg class="r" style="left:2.3px;top:178px;overflow:hidden" width="69.6" height="51.4" viewBox="0 0 69.6 51.4" preserveAspectRatio="none"><rect width="69.6" height="51.4" fill="#a1a1a1"/><polygon points="16.95,20.5 26.32,4.0 106.32,-136.0 125.07,-136.0 134.45,-119.5 125.07,-103.0 45.07,37.0 26.32,37.0" fill="#8e8e8e"/><g transform="translate(16.95,4.0) scale(0.9375,0.9706)"><path d="M2.21,19.82 Q0.70,17.00 2.21,14.18 L7.89,3.62 Q9.40,0.80 12.60,0.80 L27.40,0.80 Q30.60,0.80 32.11,3.62 L37.79,14.18 Q39.30,17.00 37.79,19.82 L32.11,30.38 Q30.60,33.20 27.40,33.20 L12.60,33.20 Q9.40,33.20 7.89,30.38 Z" fill="#fff" stroke="#ea8a2e" stroke-width="1.3"/><clipPath id="gb0l"><rect x="0" y="0" width="20" height="34"/></clipPath><path d="M30.7,13.71 L30.98,14.81 L34.0,14.64 L34.0,19.36 L30.98,19.19 L30.7,20.29 L29.9,22.24 L29.31,23.22 L31.57,25.23 L28.23,28.57 L26.22,26.31 L25.24,26.9 L23.29,27.7 L22.19,27.98 L22.36,31.0 L17.64,31.0 L17.81,27.98 L16.71,27.7 L14.76,26.9 L13.78,26.31 L11.77,28.57 L8.43,25.23 L10.69,23.22 L10.1,22.24 L9.3,20.29 L9.02,19.19 L6.0,19.36 L6.0,14.64 L9.02,14.81 L9.3,13.71 L10.1,11.76 L10.69,10.78 L8.43,8.77 L11.77,5.43 L13.78,7.69 L14.76,7.1 L16.71,6.3 L17.81,6.02 L17.64,3.0 L22.36,3.0 L22.19,6.02 L23.29,6.3 L25.24,7.1 L26.22,7.69 L28.23,5.43 L31.57,8.77 L29.31,10.78 L29.9,11.76Z" fill="#f4a131"/><path d="M30.7,13.71 L30.98,14.81 L34.0,14.64 L34.0,19.36 L30.98,19.19 L30.7,20.29 L29.9,22.24 L29.31,23.22 L31.57,25.23 L28.23,28.57 L26.22,26.31 L25.24,26.9 L23.29,27.7 L22.19,27.98 L22.36,31.0 L17.64,31.0 L17.81,27.98 L16.71,27.7 L14.76,26.9 L13.78,26.31 L11.77,28.57 L8.43,25.23 L10.69,23.22 L10.1,22.24 L9.3,20.29 L9.02,19.19 L6.0,19.36 L6.0,14.64 L9.02,14.81 L9.3,13.71 L10.1,11.76 L10.69,10.78 L8.43,8.77 L11.77,5.43 L13.78,7.69 L14.76,7.1 L16.71,6.3 L17.81,6.02 L17.64,3.0 L22.36,3.0 L22.19,6.02 L23.29,6.3 L25.24,7.1 L26.22,7.69 L28.23,5.43 L31.57,8.77 L29.31,10.78 L29.9,11.76Z" fill="#fbb813" clip-path="url(#gb0l)"/><circle cx="20" cy="17" r="7" fill="#fff" stroke="#f29a1a" stroke-width="0.9"/></g></svg><div class="t" style="left:-162.9px;width:400px;text-align:center;top:220.11px;font-size:6.57px;line-height:8.6px;color:#ececec;transform:scaleX(0.9346);transform-origin:50% 50%;">Оборудование</div><svg class="r" style="left:71.9px;top:178px;overflow:hidden" width="69.6" height="51.4" viewBox="0 0 69.6 51.4" preserveAspectRatio="none"><rect width="69.6" height="51.4" fill="#727272"/><polygon points="16.95,20.5 26.32,4.0 106.32,-136.0 125.07,-136.0 134.45,-119.5 125.07,-103.0 45.07,37.0 26.32,37.0" fill="#5b5b5b"/><g transform="translate(16.95,4.0) scale(0.9375,0.9706)"><path d="M2.21,19.82 Q0.70,17.00 2.21,14.18 L7.89,3.62 Q9.40,0.80 12.60,0.80 L27.40,0.80 Q30.60,0.80 32.11,3.62 L37.79,14.18 Q39.30,17.00 37.79,19.82 L32.11,30.38 Q30.60,33.20 27.40,33.20 L12.60,33.20 Q9.40,33.20 7.89,30.38 Z" fill="#fff" stroke="#ea8a2e" stroke-width="1.3"/><polygon points="5.5,13.2 20,2.3 20,13.2" fill="#fbb813"/><polygon points="20,2.3 34.5,13.2 20,13.2" fill="#f4a131"/><rect x="11" y="4.5" width="2.6" height="6" fill="#fbb813"/><rect x="7.8" y="12" width="12.2" height="16.3" fill="#fbb813"/><rect x="20" y="12" width="12" height="16.3" fill="#f4a131"/><rect x="11.6" y="16.5" width="6.4" height="11.8" fill="#f4a131"/><rect x="22" y="14.8" width="5.5" height="8.8" fill="#fde6c4"/><rect x="24.5" y="14.8" width="0.5" height="8.8" fill="#fff"/><rect x="22" y="19" width="5.5" height="0.5" fill="#fff"/><rect x="6.5" y="28.3" width="27" height="1.6" fill="#f29a1a"/></g></svg><div class="t" style="left:-93.3px;width:400px;text-align:center;top:220.11px;font-size:6.57px;line-height:8.6px;color:#ececec;transform:scaleX(0.9346);transform-origin:50% 50%;">Охраняемый объект</div><svg class="r" style="left:141.5px;top:178px;overflow:hidden" width="69.6" height="51.4" viewBox="0 0 69.6 51.4" preserveAspectRatio="none"><rect width="69.6" height="51.4" fill="#727272"/><polygon points="16.95,20.5 26.32,4.0 106.32,-136.0 125.07,-136.0 134.45,-119.5 125.07,-103.0 45.07,37.0 26.32,37.0" fill="#5b5b5b"/><g transform="translate(16.95,4.0) scale(0.9375,0.9706)"><path d="M2.21,19.82 Q0.70,17.00 2.21,14.18 L7.89,3.62 Q9.40,0.80 12.60,0.80 L27.40,0.80 Q30.60,0.80 32.11,3.62 L37.79,14.18 Q39.30,17.00 37.79,19.82 L32.11,30.38 Q30.60,33.20 27.40,33.20 L12.60,33.20 Q9.40,33.20 7.89,30.38 Z" fill="#fff" stroke="#ea8a2e" stroke-width="1.3"/><clipPath id="gb2c"><rect x="0" y="0" width="19.5" height="34"/></clipPath><path d="M28.68,10.68 L28.92,11.63 L31.33,11.51 L31.33,15.49 L28.92,15.37 L28.68,16.32 L27.98,17.99 L27.48,18.83 L29.28,20.46 L26.46,23.28 L24.83,21.48 L23.99,21.98 L22.32,22.68 L21.37,22.92 L21.49,25.33 L17.51,25.33 L17.63,22.92 L16.68,22.68 L15.01,21.98 L14.17,21.48 L12.54,23.28 L9.72,20.46 L11.52,18.83 L11.02,17.99 L10.32,16.32 L10.08,15.37 L7.67,15.49 L7.67,11.51 L10.08,11.63 L10.32,10.68 L11.02,9.01 L11.52,8.17 L9.72,6.54 L12.54,3.72 L14.17,5.52 L15.01,5.02 L16.68,4.32 L17.63,4.08 L17.51,1.67 L21.49,1.67 L21.37,4.08 L22.32,4.32 L23.99,5.02 L24.83,5.52 L26.46,3.72 L29.28,6.54 L27.48,8.17 L27.98,9.01Z" fill="#f4a131"/><path d="M28.68,10.68 L28.92,11.63 L31.33,11.51 L31.33,15.49 L28.92,15.37 L28.68,16.32 L27.98,17.99 L27.48,18.83 L29.28,20.46 L26.46,23.28 L24.83,21.48 L23.99,21.98 L22.32,22.68 L21.37,22.92 L21.49,25.33 L17.51,25.33 L17.63,22.92 L16.68,22.68 L15.01,21.98 L14.17,21.48 L12.54,23.28 L9.72,20.46 L11.52,18.83 L11.02,17.99 L10.32,16.32 L10.08,15.37 L7.67,15.49 L7.67,11.51 L10.08,11.63 L10.32,10.68 L11.02,9.01 L11.52,8.17 L9.72,6.54 L12.54,3.72 L14.17,5.52 L15.01,5.02 L16.68,4.32 L17.63,4.08 L17.51,1.67 L21.49,1.67 L21.37,4.08 L22.32,4.32 L23.99,5.02 L24.83,5.52 L26.46,3.72 L29.28,6.54 L27.48,8.17 L27.98,9.01Z" fill="#fbb813" clip-path="url(#gb2c)"/><circle cx="19.5" cy="13.5" r="6.6" fill="#fff"/><path d="M16.8,13 v-2.4 a2.7,2.7 0 0 1 5.4,0 v2.4" fill="none" stroke="#f4a131" stroke-width="1.3"/><rect x="15.2" y="12.6" width="8.6" height="7" rx="0.6" fill="#f4a131"/><rect x="19" y="14.8" width="1" height="2.4" fill="#8a5a20"/><path d="M21.5,27 v-8.6 a1.3,1.3 0 0 1 2.6,0 v4.4 l4.5,0.9 c1.2,0.3 1.8,1 1.8,2.3 v4 c0,2 -1.2,3.3 -3.3,3.3 h-3.3 c-1.3,0 -2.1,-0.6 -2.8,-1.6 l-2.6,-3.6 c-0.6,-0.9 0.4,-1.8 1.3,-1.2 z" fill="#ecd0ac" stroke="#9a8a7a" stroke-width="0.6"/><path d="M26,23.2 v3 M28,23.8 v2.6" stroke="#c8ac8a" stroke-width="0.5"/></g></svg><div class="t" style="left:-23.7px;width:400px;text-align:center;top:220.11px;font-size:6.57px;line-height:8.6px;color:#ececec;transform:scaleX(0.9346);transform-origin:50% 50%;">Управление</div><svg class="r" style="left:211.1px;top:178px;overflow:hidden" width="69.6" height="51.4" viewBox="0 0 69.6 51.4" preserveAspectRatio="none"><rect width="69.6" height="51.4" fill="#727272"/><polygon points="16.95,20.5 26.32,4.0 106.32,-136.0 125.07,-136.0 134.45,-119.5 125.07,-103.0 45.07,37.0 26.32,37.0" fill="#5b5b5b"/><g transform="translate(16.95,4.0) scale(0.9375,0.9706)"><path d="M2.21,19.82 Q0.70,17.00 2.21,14.18 L7.89,3.62 Q9.40,0.80 12.60,0.80 L27.40,0.80 Q30.60,0.80 32.11,3.62 L37.79,14.18 Q39.30,17.00 37.79,19.82 L32.11,30.38 Q30.60,33.20 27.40,33.20 L12.60,33.20 Q9.40,33.20 7.89,30.38 Z" fill="#fff" stroke="#ea8a2e" stroke-width="1.3"/><path d="M8.9,29 c0,-4.6 2.6,-7.6 6,-8.2 h10.2 c3.4,0.6 6.2,3.6 6.2,8.2 z" fill="#fbb813"/><path d="M20,20.8 h5.1 c3.4,0.6 6.2,3.6 6.2,8.2 h-11.3 z" fill="#f4a131"/><rect x="17.6" y="18" width="4.8" height="3.6" fill="#f3d2b2"/><ellipse cx="20" cy="13.6" rx="5.6" ry="6.6" fill="#fbe0c8"/><path d="M13.4,13.8 c-0.6,-6.4 2.4,-10 6.6,-10 c4.2,0 7.2,3.6 6.6,10 c-0.4,-2.2 -1,-3.4 -2,-3.8 c-2.6,0.6 -6.6,0.6 -9.2,0 c-1,0.4 -1.6,1.6 -2,3.8 z" fill="#5e5e5e"/></g></svg><div class="t" style="left:45.9px;width:400px;text-align:center;top:220.11px;font-size:6.57px;line-height:8.6px;color:#ececec;transform:scaleX(0.9346);transform-origin:50% 50%;">Персонал</div><svg class="r" style="left:280.7px;top:178px;overflow:hidden" width="69.6" height="51.4" viewBox="0 0 69.6 51.4" preserveAspectRatio="none"><rect width="69.6" height="51.4" fill="#727272"/><polygon points="16.95,20.5 26.32,4.0 106.32,-136.0 125.07,-136.0 134.45,-119.5 125.07,-103.0 45.07,37.0 26.32,37.0" fill="#5b5b5b"/><g transform="translate(16.95,4.0) scale(0.9375,0.9706)"><path d="M2.21,19.82 Q0.70,17.00 2.21,14.18 L7.89,3.62 Q9.40,0.80 12.60,0.80 L27.40,0.80 Q30.60,0.80 32.11,3.62 L37.79,14.18 Q39.30,17.00 37.79,19.82 L32.11,30.38 Q30.60,33.20 27.40,33.20 L12.60,33.20 Q9.40,33.20 7.89,30.38 Z" fill="#fff" stroke="#ea8a2e" stroke-width="1.3"/><rect x="8.2" y="8.2" width="23.6" height="16.6" fill="#fff" stroke="#f7a800" stroke-width="2.8"/><path d="M21.13,15.25 L21.23,15.64 L22.33,15.57 L22.33,17.23 L21.23,17.16 L21.13,17.55 L20.85,18.22 L20.64,18.57 L21.47,19.3 L20.3,20.47 L19.57,19.64 L19.22,19.85 L18.55,20.13 L18.16,20.23 L18.23,21.33 L16.57,21.33 L16.64,20.23 L16.25,20.13 L15.58,19.85 L15.23,19.64 L14.5,20.47 L13.33,19.3 L14.16,18.57 L13.95,18.22 L13.67,17.55 L13.57,17.16 L12.47,17.23 L12.47,15.57 L13.57,15.64 L13.67,15.25 L13.95,14.58 L14.16,14.23 L13.33,13.5 L14.5,12.33 L15.23,13.16 L15.58,12.95 L16.25,12.67 L16.64,12.57 L16.57,11.47 L18.23,11.47 L18.16,12.57 L18.55,12.67 L19.22,12.95 L19.57,13.16 L20.3,12.33 L21.47,13.5 L20.64,14.23 L20.85,14.58Z" fill="#f9ad10"/><circle cx="17.4" cy="16.4" r="2.2" fill="#fff"/><path d="M27.39,18.46 L27.45,18.71 L28.16,18.67 L28.16,19.73 L27.45,19.69 L27.39,19.94 L27.21,20.37 L27.08,20.59 L27.61,21.06 L26.86,21.81 L26.39,21.28 L26.17,21.41 L25.74,21.59 L25.49,21.65 L25.53,22.36 L24.47,22.36 L24.51,21.65 L24.26,21.59 L23.83,21.41 L23.61,21.28 L23.14,21.81 L22.39,21.06 L22.92,20.59 L22.79,20.37 L22.61,19.94 L22.55,19.69 L21.84,19.73 L21.84,18.67 L22.55,18.71 L22.61,18.46 L22.79,18.03 L22.92,17.81 L22.39,17.34 L23.14,16.59 L23.61,17.12 L23.83,16.99 L24.26,16.81 L24.51,16.75 L24.47,16.04 L25.53,16.04 L25.49,16.75 L25.74,16.81 L26.17,16.99 L26.39,17.12 L26.86,16.59 L27.61,17.34 L27.08,17.81 L27.21,18.03Z" fill="#f4a131"/><circle cx="25" cy="19.2" r="1.4" fill="#fff"/><rect x="19" y="26" width="2.2" height="2.2" fill="#f7a800"/><rect x="15" y="28.2" width="10" height="1.4" rx="0.5" fill="#4a4a4a"/></g></svg><div class="t" style="left:115.5px;width:400px;text-align:center;top:220.11px;font-size:6.57px;line-height:8.6px;color:#ececec;transform:scaleX(0.9346);transform-origin:50% 50%;">Рабочие места</div><div class="r" style="left:70.9px;top:178px;width:1.0px;height:51.4px;background:#b4b4b6;"></div><div class="r" style="left:140.5px;top:178px;width:1.0px;height:51.4px;background:#b4b4b6;"></div><div class="r" style="left:210.1px;top:178px;width:1.0px;height:51.4px;background:#b4b4b6;"></div><div class="r" style="left:279.7px;top:178px;width:1.0px;height:51.4px;background:#b4b4b6;"></div><div class="r" style="left:2.3px;top:229.4px;width:575.7px;height:8.6px;background:#e9e9ee;border-bottom:1px solid #fbfbfd;"></div><div class="r" style="left:2.3px;top:238px;width:575.7px;height:1.2px;background:#707070;"></div><div class="r" style="left:2.3px;top:239.2px;width:236.5px;height:295.4px;background:#f5f5fd;border:1px solid #cfcfd6;border-top:none;"></div><div class="r" style="left:3px;top:371.65px;width:228.3px;height:8.6px;background:#d3e4f8;"></div><div class="win" style="left:2.3px;top:239.2px;width:229px;height:287.5px"><div class="r" style="left:-2.3px;top:-239.2px;width:1200px;height:640px"><svg class="r" style="left:6.69px;top:244.17px;" width="4.12" height="2.85" viewBox="0 0 5.2 3.6" preserveAspectRatio="none"><polygon points="0,0 5.2,0 2.6,3.2" fill="#404040"/></svg><svg class="r" style="left:15.8px;top:241.4px;" width="8.4" height="8.4" viewBox="0 0 8 8" preserveAspectRatio="none"><circle cx="2.7" cy="2.9" r="2.0" fill="none" stroke="#5a80b0" stroke-width="1.1"/><circle cx="6.1" cy="5.7" r="1.6" fill="none" stroke="#d05050" stroke-width="1.0"/></svg><div class="t" style="left:27.3px;top:241.88px;font-size:6.634px;line-height:8.68px;color:#141414;transform:scaleX(0.9346);transform-origin:0 50%;">[test][Системное устройство] Сервер оборудования</div><svg class="r" style="left:17.49px;top:252.86px;" width="4.12" height="2.85" viewBox="0 0 5.2 3.6" preserveAspectRatio="none"><polygon points="0,0 5.2,0 2.6,3.2" fill="#404040"/></svg><svg class="r" style="left:26.6px;top:250.09px;" width="8.4" height="8.4" viewBox="0 0 8 8" preserveAspectRatio="none"><rect x="2.5" y="0.3" width="3" height="2.2" fill="#333"/><rect x="3" y="0.7" width="2" height="1.2" fill="#7fd0e0"/><rect x="3.8" y="2.5" width="0.5" height="1.3" fill="#555"/><rect x="1.5" y="3.8" width="5" height="0.5" fill="#666"/><ellipse cx="1.9" cy="6" rx="1.7" ry="1.4" fill="#8fe0ee" stroke="#333" stroke-width="0.6"/><ellipse cx="6.1" cy="6" rx="1.7" ry="1.4" fill="#8fe0ee" stroke="#333" stroke-width="0.6"/></svg><div class="t" style="left:38.1px;top:250.57px;font-size:6.634px;line-height:8.68px;color:#141414;transform:scaleX(0.9346);transform-origin:0 50%;">[Интерфейсы подключений] Интерфейсы подключений</div><svg class="r" style="left:28.29px;top:261.55px;" width="4.12" height="2.85" viewBox="0 0 5.2 3.6" preserveAspectRatio="none"><polygon points="0,0 5.2,0 2.6,3.2" fill="#404040"/></svg><svg class="r" style="left:37.4px;top:258.78px;" width="8.4" height="8.4" viewBox="0 0 8 8" preserveAspectRatio="none"><rect x="0.4" y="1.2" width="7.2" height="2.6" fill="#4aa0d8" stroke="#2a3a4a" stroke-width="0.7"/><rect x="0.4" y="4.4" width="7.2" height="2.6" fill="#4aa0d8" stroke="#2a3a4a" stroke-width="0.7"/></svg><div class="t" style="left:48.9px;top:259.26px;font-size:6.634px;line-height:8.68px;color:#141414;transform:scaleX(0.9346);transform-origin:0 50%;">[COM-порты] COM-порты</div><svg class="r" style="left:48.2px;top:267.47px;" width="8.4" height="8.4" viewBox="0 0 8 8" preserveAspectRatio="none"><rect x="0.6" y="2.7" width="6.8" height="2.6" rx="0.4" fill="#5ab0e0" stroke="#3a4a5a" stroke-width="0.7"/></svg><div class="t" style="left:59.7px;top:267.95px;font-size:6.634px;line-height:8.68px;color:#141414;transform:scaleX(0.9346);transform-origin:0 50%;">[/dev/ttyS1:19200][COM-порт] COM-порт 1</div><svg class="r" style="left:48.2px;top:276.16px;" width="8.4" height="8.4" viewBox="0 0 8 8" preserveAspectRatio="none"><rect x="0.6" y="2.7" width="6.8" height="2.6" rx="0.4" fill="#5ab0e0" stroke="#3a4a5a" stroke-width="0.7"/></svg><div class="t" style="left:59.7px;top:276.64px;font-size:6.634px;line-height:8.68px;color:#141414;transform:scaleX(0.9346);transform-origin:0 50%;">[/dev/ttyUSB0:19200][COM-порт] COM-порт 2</div><svg class="r" style="left:28.29px;top:287.62px;" width="4.12" height="2.85" viewBox="0 0 5.2 3.6" preserveAspectRatio="none"><polygon points="0,0 5.2,0 2.6,3.2" fill="#404040"/></svg><svg class="r" style="left:37.4px;top:284.85px;" width="8.4" height="8.4" viewBox="0 0 8 8" preserveAspectRatio="none"><path d="M0.5,1 h5 v3 c0,1.5 -1.2,2.5 -2.5,3 c-1.3,-0.5 -2.5,-1.5 -2.5,-3z" fill="#3d8f30"/><path d="M2.5,2.5 h5 v3 c0,1.3 -1.2,2.2 -2.5,2.5 c-1.3,-0.3 -2.5,-1.2 -2.5,-2.5z" fill="#7cc242"/></svg><div class="t" style="left:48.9px;top:285.33px;font-size:6.634px;line-height:8.68px;color:#141414;transform:scaleX(0.9346);transform-origin:0 50%;">[UDP подключения] UDP подключения</div><svg class="r" style="left:48.2px;top:293.54px;" width="8.4" height="8.4" viewBox="0 0 8 8" preserveAspectRatio="none"><path d="M1,1.5 h6 v2.5 c0,1.8 -1.5,3 -3,3.5 c-1.5,-0.5 -3,-1.7 -3,-3.5z" fill="#6db83f"/><rect x="1" y="1.5" width="6" height="1.5" fill="#8fd05a"/></svg><div class="t" style="left:59.7px;top:294.02px;font-size:6.634px;line-height:8.68px;color:#141414;transform:scaleX(0.9346);transform-origin:0 50%;">[UDP подключение] C2000-Ethernet</div><svg class="r" style="left:48.2px;top:302.23px;" width="8.4" height="8.4" viewBox="0 0 8 8" preserveAspectRatio="none"><path d="M1,1.5 h6 v2.5 c0,1.8 -1.5,3 -3,3.5 c-1.5,-0.5 -3,-1.7 -3,-3.5z" fill="#6db83f"/><rect x="1" y="1.5" width="6" height="1.5" fill="#8fd05a"/></svg><div class="t" style="left:59.7px;top:302.71px;font-size:6.634px;line-height:8.68px;color:#141414;transform:scaleX(0.9346);transform-origin:0 50%;">[UDP подключение] UDP Орион 2</div><svg class="r" style="left:17.49px;top:313.69px;" width="4.12" height="2.85" viewBox="0 0 5.2 3.6" preserveAspectRatio="none"><polygon points="0,0 5.2,0 2.6,3.2" fill="#404040"/></svg><svg class="r" style="left:26.6px;top:310.92px;" width="8.4" height="8.4" viewBox="0 0 8 8" preserveAspectRatio="none"><polygon points="0.8,4 2.4,1 5.6,1 7.2,4 5.6,7 2.4,7" fill="#dde8f0" stroke="#4a8ac0" stroke-width="0.9"/></svg><div class="t" style="left:38.1px;top:311.4px;font-size:6.634px;line-height:8.68px;color:#141414;transform:scaleX(0.9346);transform-origin:0 50%;">[ИСО "Орион"] ИСО "Орион"</div><svg class="r" style="left:28.29px;top:322.38px;" width="4.12" height="2.85" viewBox="0 0 5.2 3.6" preserveAspectRatio="none"><polygon points="0,0 5.2,0 2.6,3.2" fill="#404040"/></svg><svg class="r" style="left:37.4px;top:319.61px;" width="8.4" height="8.4" viewBox="0 0 8 8" preserveAspectRatio="none"><polygon points="0.5,4 2.2,1 5.8,1 7.5,4 5.8,7 2.2,7" fill="#4a90d0"/><rect x="2.5" y="3" width="3" height="2" fill="#fff"/></svg><svg class="r" style="left:46.7px;top:319.71px;" width="8.2" height="8.2" viewBox="0 0 8 8" preserveAspectRatio="none"><circle cx="4" cy="4" r="3.7" fill="#1fba3a"/><path d="M2.1,4.1 L3.5,5.5 L6,2.8" stroke="#fff" stroke-width="1" fill="none"/></svg><div class="t" style="left:57.5px;top:320.09px;font-size:6.634px;line-height:8.68px;color:#141414;transform:scaleX(0.9346);transform-origin:0 50%;">[00001][COM][Линия Орион Про] Линия Орион Про</div><svg class="r" style="left:39.09px;top:331.07px;" width="4.12" height="2.85" viewBox="0 0 5.2 3.6" preserveAspectRatio="none"><polygon points="0,0 5.2,0 2.6,3.2" fill="#404040"/></svg><svg class="r" style="left:48.2px;top:328.3px;" width="8.4" height="8.4" viewBox="0 0 8 8" preserveAspectRatio="none"><rect x="0.5" y="0.5" width="7" height="7" rx="0.6" fill="#b8b8b8" stroke="#7a7a7a" stroke-width="0.5"/><rect x="1.2" y="1.2" width="5.6" height="1.5" fill="#8a9a7a"/><rect x="1.5" y="3.2" width="5" height="3.8" fill="#e0e0e0"/></svg><div class="t" style="left:59.7px;top:328.78px;font-size:6.634px;line-height:8.68px;color:#141414;transform:scaleX(0.9346);transform-origin:0 50%;">[00001][C2000/C2000M] C2000/C2000M</div><svg class="r" style="left:50.68px;top:339.13px;" width="2.85" height="4.12" viewBox="0 0 3.6 5.2" preserveAspectRatio="none"><polygon points="0,0 3.2,2.6 0,5.2" fill="#404040"/></svg><svg class="r" style="left:59.0px;top:336.99px;" width="8.4" height="8.4" viewBox="0 0 8 8" preserveAspectRatio="none"><rect x="0.3" y="0.3" width="7.4" height="7.4" fill="#7ac943"/><rect x="2" y="2" width="4" height="4" rx="1" fill="#2f4a28"/><circle cx="4" cy="4" r="1" fill="#9fe070"/></svg><div class="t" style="left:70.5px;top:337.47px;font-size:6.634px;line-height:8.68px;color:#141414;transform:scaleX(0.9346);transform-origin:0 50%;">[0007][Аппаратная группа зон] Второй этаж</div><svg class="r" style="left:50.68px;top:347.82px;" width="2.85" height="4.12" viewBox="0 0 3.6 5.2" preserveAspectRatio="none"><polygon points="0,0 3.2,2.6 0,5.2" fill="#404040"/></svg><svg class="r" style="left:59.0px;top:345.68px;" width="8.4" height="8.4" viewBox="0 0 8 8" preserveAspectRatio="none"><rect x="0.3" y="0.3" width="7.4" height="7.4" fill="#7ac943"/><rect x="2" y="2" width="4" height="4" rx="1" fill="#2f4a28"/><circle cx="4" cy="4" r="1" fill="#9fe070"/></svg><div class="t" style="left:70.5px;top:346.16px;font-size:6.634px;line-height:8.68px;color:#141414;transform:scaleX(0.9346);transform-origin:0 50%;">[0013][Аппаратная группа зон] Аппаратная группа зон</div><svg class="r" style="left:50.68px;top:356.51px;" width="2.85" height="4.12" viewBox="0 0 3.6 5.2" preserveAspectRatio="none"><polygon points="0,0 3.2,2.6 0,5.2" fill="#404040"/></svg><svg class="r" style="left:59.0px;top:354.37px;" width="8.4" height="8.4" viewBox="0 0 8 8" preserveAspectRatio="none"><rect x="0.3" y="0.3" width="7.4" height="7.4" fill="#7ac943"/><rect x="2" y="2" width="4" height="4" rx="1" fill="#2f4a28"/><circle cx="4" cy="4" r="1" fill="#9fe070"/></svg><div class="t" style="left:70.5px;top:354.85px;font-size:6.634px;line-height:8.68px;color:#141414;transform:scaleX(0.9346);transform-origin:0 50%;">[0001][Аппаратная зона] Учебные классы</div><svg class="r" style="left:49.89px;top:365.83px;" width="4.12" height="2.85" viewBox="0 0 5.2 3.6" preserveAspectRatio="none"><polygon points="0,0 5.2,0 2.6,3.2" fill="#404040"/></svg><svg class="r" style="left:59.0px;top:363.06px;" width="8.4" height="8.4" viewBox="0 0 8 8" preserveAspectRatio="none"><rect x="0.3" y="0.3" width="7.4" height="7.4" fill="#7ac943"/><rect x="2" y="2" width="4" height="4" rx="1" fill="#2f4a28"/><circle cx="4" cy="4" r="1" fill="#9fe070"/></svg><div class="t" style="left:70.5px;top:363.54px;font-size:6.634px;line-height:8.68px;color:#141414;transform:scaleX(0.9346);transform-origin:0 50%;">[0002][Аппаратная зона] Книгохранилище</div><svg class="r" style="left:69.8px;top:371.75px;" width="8.4" height="8.4" viewBox="0 0 8 8" preserveAspectRatio="none"><rect x="0.5" y="0.8" width="7" height="1.6" fill="#5a9bd5"/><circle cx="2.3" cy="5.2" r="1.5" fill="#3a7bc0"/><circle cx="5.7" cy="5.2" r="1.5" fill="#3a7bc0"/><rect x="2.2" y="5" width="3.6" height="0.5" fill="#3a7bc0"/></svg><div class="t" style="left:81.3px;top:372.23px;font-size:6.634px;line-height:8.68px;color:#141414;transform:scaleX(0.9346);transform-origin:0 50%;">[00001][Вход] Дымовой ДИП-34</div><svg class="r" style="left:69.8px;top:380.44px;" width="8.4" height="8.4" viewBox="0 0 8 8" preserveAspectRatio="none"><rect x="0.5" y="0.8" width="7" height="1.6" fill="#5a9bd5"/><circle cx="2.3" cy="5.2" r="1.5" fill="#3a7bc0"/><circle cx="5.7" cy="5.2" r="1.5" fill="#3a7bc0"/><rect x="2.2" y="5" width="3.6" height="0.5" fill="#3a7bc0"/></svg><div class="t" style="left:81.3px;top:380.92px;font-size:6.634px;line-height:8.68px;color:#141414;transform:scaleX(0.9346);transform-origin:0 50%;">[00002][Вход] Тепловой ИП</div><svg class="r" style="left:69.8px;top:389.13px;" width="8.4" height="8.4" viewBox="0 0 8 8" preserveAspectRatio="none"><rect x="0.4" y="0.6" width="7.2" height="6.8" fill="#f0f0f0" stroke="#b0b0b0" stroke-width="0.5"/><path d="M1,6 L3,4 L4.5,5 L7,2.5" stroke="#9a9a9a" stroke-width="0.6" fill="none"/></svg><div class="t" style="left:81.3px;top:389.61px;font-size:6.634px;line-height:8.68px;color:#141414;transform:scaleX(0.9346);transform-origin:0 50%;">[00003][Выход] Клапан</div><svg class="r" style="left:69.8px;top:397.82px;" width="8.4" height="8.4" viewBox="0 0 8 8" preserveAspectRatio="none"><rect x="0.4" y="0.6" width="7.2" height="6.8" fill="#f0f0f0" stroke="#b0b0b0" stroke-width="0.5"/><path d="M1,6 L3,4 L4.5,5 L7,2.5" stroke="#9a9a9a" stroke-width="0.6" fill="none"/></svg><div class="t" style="left:81.3px;top:398.3px;font-size:6.634px;line-height:8.68px;color:#141414;transform:scaleX(0.9346);transform-origin:0 50%;">[00004][Выход] Рабочий выход кл</div><svg class="r" style="left:69.8px;top:406.51px;" width="8.4" height="8.4" viewBox="0 0 8 8" preserveAspectRatio="none"><rect x="0.4" y="0.6" width="7.2" height="6.8" fill="#f0f0f0" stroke="#b0b0b0" stroke-width="0.5"/><path d="M1,6 L3,4 L4.5,5 L7,2.5" stroke="#9a9a9a" stroke-width="0.6" fill="none"/></svg><div class="t" style="left:81.3px;top:406.99px;font-size:6.634px;line-height:8.68px;color:#141414;transform:scaleX(0.9346);transform-origin:0 50%;">[00005][Выход] Исходный выход к</div><svg class="r" style="left:69.8px;top:415.2px;" width="8.4" height="8.4" viewBox="0 0 8 8" preserveAspectRatio="none"><rect x="1.5" y="0.5" width="5" height="7" fill="#d8d8d8" stroke="#9a9a9a" stroke-width="0.5"/><rect x="3" y="1.5" width="2" height="5" fill="#7a9a5a"/></svg><div class="t" style="left:81.3px;top:415.68px;font-size:6.634px;line-height:8.68px;color:#141414;transform:scaleX(0.9346);transform-origin:0 50%;">[00002][С2000-КДЛ] Адресный прибор</div><svg class="r" style="left:50.68px;top:426.03px;" width="2.85" height="4.12" viewBox="0 0 3.6 5.2" preserveAspectRatio="none"><polygon points="0,0 3.2,2.6 0,5.2" fill="#404040"/></svg><svg class="r" style="left:59.0px;top:423.89px;" width="8.4" height="8.4" viewBox="0 0 8 8" preserveAspectRatio="none"><rect x="0.3" y="0.3" width="7.4" height="7.4" fill="#7ac943"/><rect x="2" y="2" width="4" height="4" rx="1" fill="#2f4a28"/><circle cx="4" cy="4" r="1" fill="#9fe070"/></svg><div class="t" style="left:70.5px;top:424.37px;font-size:6.634px;line-height:8.68px;color:#141414;transform:scaleX(0.9346);transform-origin:0 50%;">[0003][Аппаратная зона] Система тушения</div><svg class="r" style="left:50.68px;top:434.72px;" width="2.85" height="4.12" viewBox="0 0 3.6 5.2" preserveAspectRatio="none"><polygon points="0,0 3.2,2.6 0,5.2" fill="#404040"/></svg><svg class="r" style="left:59.0px;top:432.58px;" width="8.4" height="8.4" viewBox="0 0 8 8" preserveAspectRatio="none"><rect x="0.3" y="0.3" width="7.4" height="7.4" fill="#7ac943"/><rect x="2" y="2" width="4" height="4" rx="1" fill="#2f4a28"/><circle cx="4" cy="4" r="1" fill="#9fe070"/></svg><div class="t" style="left:70.5px;top:433.06px;font-size:6.634px;line-height:8.68px;color:#141414;transform:scaleX(0.9346);transform-origin:0 50%;">[0005][Аппаратная зона] УО-4С</div><svg class="r" style="left:50.68px;top:443.41px;" width="2.85" height="4.12" viewBox="0 0 3.6 5.2" preserveAspectRatio="none"><polygon points="0,0 3.2,2.6 0,5.2" fill="#404040"/></svg><svg class="r" style="left:59.0px;top:441.27px;" width="8.4" height="8.4" viewBox="0 0 8 8" preserveAspectRatio="none"><rect x="0.3" y="0.3" width="7.4" height="7.4" fill="#7ac943"/><rect x="2" y="2" width="4" height="4" rx="1" fill="#2f4a28"/><circle cx="4" cy="4" r="1" fill="#9fe070"/></svg><div class="t" style="left:70.5px;top:441.75px;font-size:6.634px;line-height:8.68px;color:#141414;transform:scaleX(0.9346);transform-origin:0 50%;">[0006][Аппаратная зона] С2000-PGE</div><svg class="r" style="left:50.68px;top:452.1px;" width="2.85" height="4.12" viewBox="0 0 3.6 5.2" preserveAspectRatio="none"><polygon points="0,0 3.2,2.6 0,5.2" fill="#404040"/></svg><svg class="r" style="left:59.0px;top:449.96px;" width="8.4" height="8.4" viewBox="0 0 8 8" preserveAspectRatio="none"><rect x="0.3" y="0.3" width="7.4" height="7.4" fill="#7ac943"/><rect x="2" y="2" width="4" height="4" rx="1" fill="#2f4a28"/><circle cx="4" cy="4" r="1" fill="#9fe070"/></svg><div class="t" style="left:70.5px;top:450.44px;font-size:6.634px;line-height:8.68px;color:#141414;transform:scaleX(0.9346);transform-origin:0 50%;">[0008][Аппаратная зона] Пульт</div><svg class="r" style="left:50.68px;top:460.79px;" width="2.85" height="4.12" viewBox="0 0 3.6 5.2" preserveAspectRatio="none"><polygon points="0,0 3.2,2.6 0,5.2" fill="#404040"/></svg><svg class="r" style="left:59.0px;top:458.65px;" width="8.4" height="8.4" viewBox="0 0 8 8" preserveAspectRatio="none"><rect x="0.3" y="0.3" width="7.4" height="7.4" fill="#7ac943"/><rect x="2" y="2" width="4" height="4" rx="1" fill="#2f4a28"/><circle cx="4" cy="4" r="1" fill="#9fe070"/></svg><div class="t" style="left:70.5px;top:459.13px;font-size:6.634px;line-height:8.68px;color:#141414;transform:scaleX(0.9346);transform-origin:0 50%;">[0009][Аппаратная зона] Пит. приборов</div><svg class="r" style="left:50.68px;top:469.48px;" width="2.85" height="4.12" viewBox="0 0 3.6 5.2" preserveAspectRatio="none"><polygon points="0,0 3.2,2.6 0,5.2" fill="#404040"/></svg><svg class="r" style="left:59.0px;top:467.34px;" width="8.4" height="8.4" viewBox="0 0 8 8" preserveAspectRatio="none"><rect x="0.3" y="0.3" width="7.4" height="7.4" fill="#7ac943"/><rect x="2" y="2" width="4" height="4" rx="1" fill="#2f4a28"/><circle cx="4" cy="4" r="1" fill="#9fe070"/></svg><div class="t" style="left:70.5px;top:467.82px;font-size:6.634px;line-height:8.68px;color:#141414;transform:scaleX(0.9346);transform-origin:0 50%;">[0010][Аппаратная зона] СКД</div><svg class="r" style="left:50.68px;top:478.17px;" width="2.85" height="4.12" viewBox="0 0 3.6 5.2" preserveAspectRatio="none"><polygon points="0,0 3.2,2.6 0,5.2" fill="#404040"/></svg><svg class="r" style="left:59.0px;top:476.03px;" width="8.4" height="8.4" viewBox="0 0 8 8" preserveAspectRatio="none"><rect x="0.3" y="0.3" width="7.4" height="7.4" fill="#7ac943"/><rect x="2" y="2" width="4" height="4" rx="1" fill="#2f4a28"/><circle cx="4" cy="4" r="1" fill="#9fe070"/></svg><div class="t" style="left:70.5px;top:476.51px;font-size:6.634px;line-height:8.68px;color:#141414;transform:scaleX(0.9346);transform-origin:0 50%;">[0011][Аппаратная зона] КДЛ-2И</div><svg class="r" style="left:50.68px;top:486.86px;" width="2.85" height="4.12" viewBox="0 0 3.6 5.2" preserveAspectRatio="none"><polygon points="0,0 3.2,2.6 0,5.2" fill="#404040"/></svg><svg class="r" style="left:59.0px;top:484.72px;" width="8.4" height="8.4" viewBox="0 0 8 8" preserveAspectRatio="none"><rect x="0.3" y="0.3" width="7.4" height="7.4" fill="#7ac943"/><rect x="2" y="2" width="4" height="4" rx="1" fill="#2f4a28"/><circle cx="4" cy="4" r="1" fill="#9fe070"/></svg><div class="t" style="left:70.5px;top:485.2px;font-size:6.634px;line-height:8.68px;color:#141414;transform:scaleX(0.9346);transform-origin:0 50%;">[0012][Аппаратная зона] Затопление</div><svg class="r" style="left:50.68px;top:495.55px;" width="2.85" height="4.12" viewBox="0 0 3.6 5.2" preserveAspectRatio="none"><polygon points="0,0 3.2,2.6 0,5.2" fill="#404040"/></svg><svg class="r" style="left:59.0px;top:493.41px;" width="8.4" height="8.4" viewBox="0 0 8 8" preserveAspectRatio="none"><rect x="0.3" y="0.3" width="7.4" height="7.4" fill="#7ac943"/><rect x="2" y="2" width="4" height="4" rx="1" fill="#2f4a28"/><circle cx="4" cy="4" r="1" fill="#9fe070"/></svg><div class="t" style="left:70.5px;top:493.89px;font-size:6.634px;line-height:8.68px;color:#141414;transform:scaleX(0.9346);transform-origin:0 50%;">[0015][Аппаратная зона] Аппаратная зона</div><svg class="r" style="left:50.68px;top:504.24px;" width="2.85" height="4.12" viewBox="0 0 3.6 5.2" preserveAspectRatio="none"><polygon points="0,0 3.2,2.6 0,5.2" fill="#404040"/></svg><svg class="r" style="left:59.0px;top:502.1px;" width="8.4" height="8.4" viewBox="0 0 8 8" preserveAspectRatio="none"><rect x="0.3" y="0.3" width="7.4" height="7.4" fill="#7ac943"/><rect x="2" y="2" width="4" height="4" rx="1" fill="#2f4a28"/><circle cx="4" cy="4" r="1" fill="#9fe070"/></svg><div class="t" style="left:70.5px;top:502.58px;font-size:6.634px;line-height:8.68px;color:#141414;transform:scaleX(0.9346);transform-origin:0 50%;">[0016][Аппаратная зона] КДЛ</div><svg class="r" style="left:50.68px;top:512.93px;" width="2.85" height="4.12" viewBox="0 0 3.6 5.2" preserveAspectRatio="none"><polygon points="0,0 3.2,2.6 0,5.2" fill="#404040"/></svg><svg class="r" style="left:59.0px;top:510.79px;" width="8.4" height="8.4" viewBox="0 0 8 8" preserveAspectRatio="none"><rect x="0.3" y="0.3" width="7.4" height="7.4" fill="#7ac943"/><rect x="2" y="2" width="4" height="4" rx="1" fill="#2f4a28"/><circle cx="4" cy="4" r="1" fill="#9fe070"/></svg><div class="t" style="left:70.5px;top:511.27px;font-size:6.634px;line-height:8.68px;color:#141414;transform:scaleX(0.9346);transform-origin:0 50%;">[0020][Аппаратная зона] Аппаратная зона</div><svg class="r" style="left:59.0px;top:519.48px;" width="8.4" height="8.4" viewBox="0 0 8 8" preserveAspectRatio="none"><rect x="2" y="0.5" width="4" height="7" rx="0.5" fill="#e4e4e4" stroke="#a0a0a0" stroke-width="0.5"/><rect x="3" y="6" width="2" height="1" fill="#6ab04c"/></svg><div class="t" style="left:70.5px;top:519.96px;font-size:6.634px;line-height:8.68px;color:#141414;transform:scaleX(0.9346);transform-origin:0 50%;">[00001][Считыватель] Клавиатура</div></div></div><div class="r" style="left:231.3px;top:239.2px;width:7.5px;height:287.6px;background:#ffffff;border-left:1px solid #e2e2e6;"></div><div class="r" style="left:231.6px;top:426px;width:7.2px;height:94px;background:#e1e1e5;"></div><svg class="r" style="left:233.1px;top:242.5px;" width="4" height="2.4" viewBox="0 0 4 2.4" preserveAspectRatio="none"><polygon points="0,2.4 4,2.4 2,0" fill="#333"/></svg><div class="r" style="left:231.3px;top:520px;width:7.5px;height:6.8px;background:#fff;border-left:1px solid #e2e2e6;border-top:1px solid #e0e0e4;"></div><svg class="r" style="left:233.1px;top:522.3px;" width="4" height="2.4" viewBox="0 0 4 2.4" preserveAspectRatio="none"><polygon points="0,0 4,0 2,2.4" fill="#333"/></svg><div class="r" style="left:2.3px;top:526.8px;width:229.0px;height:7.6px;background:#fbfbfb;border-top:1px solid #e0e0e4;"></div><div class="r" style="left:9.8px;top:526.8px;width:0.8px;height:7.6px;background:#d8d8dc;"></div><div class="r" style="left:216.8px;top:527.4px;width:7.2px;height:7.0px;background:#e1e1e5;border-left:1px solid #d6d6da;"></div><svg class="r" style="left:4.8px;top:528.6px;" width="2.4" height="4" viewBox="0 0 2.4 4" preserveAspectRatio="none"><polygon points="2.4,0 2.4,4 0,2" fill="#333"/></svg><svg class="r" style="left:226.6px;top:528.6px;" width="2.4" height="4" viewBox="0 0 2.4 4" preserveAspectRatio="none"><polygon points="0,0 0,4 2.4,2" fill="#333"/></svg><div class="r" style="left:231.3px;top:526.8px;width:7.5px;height:7.6px;background:#ebebef;"></div><div class="r" style="left:238.8px;top:239.2px;width:2.4px;height:295.4px;background:#c9c9ce;"></div><div class="r" style="left:239.6px;top:239.2px;width:1.0px;height:295.4px;background:#a9a9ae;"></div><div class="t" style="left:5.3px;top:537.72px;font-size:6.741px;line-height:8.82px;color:#141414;transform:scaleX(0.9346);transform-origin:0 50%;">OK</div><div class="r" style="left:241.2px;top:239.2px;width:336.8px;height:269.8px;background:#ebebf0;"></div><div class="r" style="left:241.2px;top:239.2px;width:336.8px;height:20.8px;background:#f0f0f5;border-bottom:1px solid #dcdce2;"></div><div class="r" style="left:246.9px;top:241.9px;width:310.4px;height:15.4px;background:#f7f7fd;border:1px solid #dcdce4;"></div><div class="t" style="left:248.3px;top:242.3px;font-size:9.975px;line-height:14.7px;color:#111;font-weight:bold;transform:scaleX(1.0526);transform-origin:0 50%;">Дымовой ДИП-34</div><svg class="r" style="left:546.1px;top:245.4px;" width="7.4" height="7.4" viewBox="0 0 10 10" preserveAspectRatio="none"><circle cx="5" cy="5" r="5" fill="#4a4a4a"/><path d="M3.1,3.1 L6.9,6.9 M6.9,3.1 L3.1,6.9" stroke="#f0f0f0" stroke-width="1.6"/></svg><svg class="r" style="left:562.0px;top:242.1px;" width="14.4" height="14.4" viewBox="0 0 20 20" preserveAspectRatio="none"><circle cx="10" cy="10" r="10" fill="#f2a11a"/><path d="M10.6,4.2 L4.4,10 L10.6,15.8 L10.6,12.3 L16.2,12.3 L16.2,7.7 L10.6,7.7 Z" fill="#fff" stroke="#fff" stroke-width="0.6" stroke-linejoin="round"/></svg><div class="t" style="left:247.6px;top:264.52px;font-size:6.741px;line-height:8.82px;color:#1c1c1c;transform:scaleX(0.9346);transform-origin:0 50%;">Местоположение элемента</div><div class="r" style="left:247.6px;top:272.5px;width:324.1px;height:42.1px;background:#e9e9ee;border:1px solid #d2d2d8;border-radius:2px;"></div><div class="t" style="left:255.5px;top:282.22px;font-size:6.741px;line-height:8.82px;color:#1c1c1c;transform:scaleX(0.9346);transform-origin:0 50%;">Системный путь</div><div class="r" style="left:308.7px;top:280.6px;width:255.3px;height:10.9px;background:#f5f5fd;border:1px solid #c9c9d1;border-radius:2px;"></div><div class="t" style="left:311.7px;top:282.33px;font-size:6.634px;line-height:8.68px;color:#141414;transform:scaleX(0.9346);transform-origin:0 50%;">Структура\[2] Книгохранилище</div><div class="t" style="left:255.5px;top:297.82px;font-size:6.741px;line-height:8.82px;color:#1c1c1c;transform:scaleX(0.9346);transform-origin:0 50%;">Аппаратный путь</div><div class="r" style="left:308.7px;top:296px;width:255.3px;height:11px;background:#f5f5fd;border:1px solid #c9c9d1;border-radius:2px;"></div><div class="t" style="left:311.7px;top:297.78px;font-size:6.634px;line-height:8.68px;color:#141414;transform:scaleX(0.9346);transform-origin:0 50%;">[1] Линия Орион Про\[1] С2000/С2000М\[2] Адресный прибор</div><div class="r" style="left:247.6px;top:318.5px;width:324.1px;height:56.1px;background:#e9e9ee;border:1px solid #d2d2d8;border-radius:2px;"></div><div class="t" style="left:254px;top:327.22px;font-size:6.741px;line-height:8.82px;color:#1c1c1c;transform:scaleX(0.9346);transform-origin:0 50%;">Номер</div><div class="r" style="left:287px;top:325.7px;width:74px;height:10.8px;background:#f5f5fd;border:1px solid #c9c9d1;border-radius:2px;"></div><div class="r" style="left:353px;top:326.7px;width:0.7px;height:8.8px;background:#d6d6dc;"></div><svg class="r" style="left:354.8px;top:327.5px;" width="4" height="2.6" viewBox="0 0 4 2.6" preserveAspectRatio="none"><polygon points="0,2.6 4,2.6 2,0" fill="#aaa"/></svg><svg class="r" style="left:354.8px;top:332.1px;" width="4" height="2.6" viewBox="0 0 4 2.6" preserveAspectRatio="none"><polygon points="0,0 4,0 2,2.6" fill="#aaa"/></svg><div class="t" style="left:290px;top:327.38px;font-size:6.634px;line-height:8.68px;color:#9a9a9a;transform:scaleX(0.9346);transform-origin:0 50%;">1</div><div class="t" style="left:254px;top:342.92px;font-size:6.741px;line-height:8.82px;color:#1c1c1c;transform:scaleX(0.9346);transform-origin:0 50%;">Contact Id</div><div class="r" style="left:287px;top:341px;width:74px;height:11px;background:#f5f5fd;border:1px solid #c9c9d1;border-radius:2px;"></div><div class="r" style="left:353px;top:342px;width:0.7px;height:9px;background:#d6d6dc;"></div><svg class="r" style="left:354.8px;top:342.8px;" width="4" height="2.6" viewBox="0 0 4 2.6" preserveAspectRatio="none"><polygon points="0,2.6 4,2.6 2,0" fill="#333"/></svg><svg class="r" style="left:354.8px;top:347.6px;" width="4" height="2.6" viewBox="0 0 4 2.6" preserveAspectRatio="none"><polygon points="0,0 4,0 2,2.6" fill="#333"/></svg><div class="t" style="left:290px;top:342.78px;font-size:6.634px;line-height:8.68px;color:#222;transform:scaleX(0.9346);transform-origin:0 50%;">1</div><div class="t" style="left:254px;top:358.22px;font-size:6.741px;line-height:8.82px;color:#1c1c1c;transform:scaleX(0.9346);transform-origin:0 50%;">Тип</div><div class="r" style="left:287px;top:356.3px;width:74px;height:11.2px;background:linear-gradient(#fafafb,#ececf0);border:1px solid #c9c9d1;border-radius:2px;"></div><div class="t" style="left:290px;top:358.28px;font-size:6.634px;line-height:8.68px;color:#141414;transform:scaleX(0.9346);transform-origin:0 50%;">Пожарный</div><svg class="r" style="left:353px;top:360.8px;" width="4" height="2.6" viewBox="0 0 4 2.6" preserveAspectRatio="none"><polygon points="0,0 4,0 2,2.6" fill="#333"/></svg><div class="t" style="left:247.6px;top:377.72px;font-size:6.741px;line-height:8.82px;color:#1c1c1c;transform:scaleX(0.9346);transform-origin:0 50%;">Параметры запроса АЦП</div><div class="r" style="left:247.6px;top:385.7px;width:324.1px;height:39.8px;background:#e9e9ee;border:1px solid #d2d2d8;border-radius:2px;"></div><div class="r" style="left:255.4px;top:394.3px;width:6.6px;height:6.9px;background:#f8f8fc;border:1px solid #b8b8c0;border-radius:1px;"></div><svg class="r" style="left:256.2px;top:394.6px;" width="5.5" height="6" viewBox="0 0 5.5 6" preserveAspectRatio="none"><path d="M0.8,3.2 L2.3,5.2 L4.8,0.6" stroke="#111" stroke-width="1" fill="none"/></svg><div class="t" style="left:265.4px;top:394.02px;font-size:6.741px;line-height:8.82px;color:#1c1c1c;transform:scaleX(0.9346);transform-origin:0 50%;">Запрашивать АЦП</div><div class="t" style="left:255px;top:408.12px;font-size:6.741px;line-height:8.82px;color:#1c1c1c;transform:scaleX(0.9346);transform-origin:0 50%;">Периодичность запроса</div><div class="r" style="left:329px;top:406.5px;width:27.7px;height:11.0px;background:#f5f5fd;border:1px solid #c9c9d1;border-radius:2px;"></div><div class="r" style="left:348.7px;top:407.5px;width:0.7px;height:9.0px;background:#d6d6dc;"></div><svg class="r" style="left:350.5px;top:408.3px;" width="4" height="2.6" viewBox="0 0 4 2.6" preserveAspectRatio="none"><polygon points="0,2.6 4,2.6 2,0" fill="#333"/></svg><svg class="r" style="left:350.5px;top:413.1px;" width="4" height="2.6" viewBox="0 0 4 2.6" preserveAspectRatio="none"><polygon points="0,0 4,0 2,2.6" fill="#333"/></svg><div class="t" style="left:332px;top:408.28px;font-size:6.634px;line-height:8.68px;color:#222;transform:scaleX(0.9346);transform-origin:0 50%;">10</div><div class="t" style="left:360.6px;top:408.12px;font-size:6.741px;line-height:8.82px;color:#1c1c1c;transform:scaleX(0.9346);transform-origin:0 50%;">секунд</div><div class="r" style="left:241.2px;top:508.6px;width:336.8px;height:0.8px;background:#d4d4da;"></div><div class="r" style="left:246.5px;top:512.6px;width:69.1px;height:18.0px;background:linear-gradient(#fbfbfc,#e8e8ec);border:1px solid #c6c6cb;border-radius:2px;"></div><div class="t" style="left:81.05px;width:400px;text-align:center;top:517.76px;font-size:6.848px;line-height:8.96px;color:#141414;letter-spacing:0.25px;transform:scaleX(0.9346);transform-origin:50% 50%;">Применить</div><div class="r" style="left:319.5px;top:512.6px;width:69.0px;height:18.0px;background:linear-gradient(#fbfbfc,#e8e8ec);border:1px solid #c6c6cb;border-radius:2px;"></div><div class="t" style="left:154.0px;width:400px;text-align:center;top:517.76px;font-size:6.848px;line-height:8.96px;color:#141414;letter-spacing:0.25px;transform:scaleX(0.9346);transform-origin:50% 50%;">Отмена</div><div class="r" style="left:619.5px;top:252.3px;width:581.0px;height:388.2px;background:#5882a8;"></div><div class="r" style="left:619.5px;top:252.3px;width:581.0px;height:1.0px;background:#7d9dbb;"></div><div class="r" style="left:622.0px;top:267.0px;width:576.0px;height:371.0px;background:#ebebf0;"></div><svg class="r" style="left:623.8px;top:255.8px;" width="9.4" height="9.4" viewBox="0 0 12 12" preserveAspectRatio="none"><path d="M2.5,10.5 c-0.8,-0.8 -0.6,-1.6 0.2,-2.2 l5.2,-4.2 l1,1 l-4.2,5.2 c-0.6,0.8 -1.4,1 -2.2,0.2z" fill="#f7a81b"/><path d="M8,4 l2.2,-2.2 c0.4,-0.4 1,-0.3 1.3,0.1 c0.3,0.4 0.2,0.9 -0.2,1.2 l-2.2,2 z" fill="#f7a81b"/><path d="M1.5,1.5 c1,-0.6 2.3,-0.5 3.1,0.3 c0.7,0.7 0.9,1.6 0.6,2.4 l6.2,6.2 c0.4,0.4 0.4,1 0,1.3 c-0.4,0.4 -1,0.4 -1.3,0 l-6.2,-6.2 c-0.8,0.3 -1.8,0.1 -2.4,-0.6 c-0.8,-0.8 -0.9,-2.1 -0.3,-3.1 l1.6,1.6 l1.2,-0.3 l0.3,-1.2 z" fill="#2a9be0"/><path d="M2.5,10.5 c-0.8,-0.8 -0.6,-1.6 0.2,-2.2 l5.2,-4.2 l1,1 l-4.2,5.2 c-0.6,0.8 -1.4,1 -2.2,0.2z" fill="#f7a81b"/></svg><div class="t" style="left:636px;top:256.39px;font-size:7.865px;line-height:10.29px;color:#e9eef4;transform:scaleX(0.9346);transform-origin:0 50%;">Менеджер конфигурации - [Иванов Иван Иванович]</div><svg class="r" style="left:1187.6px;top:256.6px;" width="8.0" height="8.0" viewBox="0 0 8 8" preserveAspectRatio="none"><path d="M1.2,1.2 L6.8,6.8 M6.8,1.2 L1.2,6.8" stroke="#dfe6ee" stroke-width="1.1"/></svg><svg class="r" style="left:1173.6px;top:256.6px;" width="8.0" height="8.0" viewBox="0 0 8 8" preserveAspectRatio="none"><rect x="1.6" y="1.6" width="4.8" height="4.8" rx="0.8" fill="none" stroke="#dfe6ee" stroke-width="1.2"/></svg><svg class="r" style="left:1160.6px;top:256.6px;" width="8.0" height="8.0" viewBox="0 0 8 8" preserveAspectRatio="none"><rect x="1.2" y="5.2" width="5" height="1.3" fill="#dfe6ee"/></svg><div class="r" style="left:622.5px;top:267px;width:347.0px;height:51.5px;background:#c2c2c4;"></div><svg class="r" style="left:622.5px;top:267px;overflow:hidden" width="69.4" height="51.5" viewBox="0 0 69.4 51.5" preserveAspectRatio="none"><rect width="69.4" height="51.5" fill="#727272"/><polygon points="16.75,20.8 96.75,-119.2 106.08,-135.2 124.73,-135.2 134.05,-119.2 54.05,20.8 44.73,36.8 26.08,36.8" fill="#5b5b5b"/><g transform="translate(16.75,4.8) scale(0.9325,0.9412)"><path d="M2.21,19.82 Q0.70,17.00 2.21,14.18 L7.89,3.62 Q9.40,0.80 12.60,0.80 L27.40,0.80 Q30.60,0.80 32.11,3.62 L37.79,14.18 Q39.30,17.00 37.79,19.82 L32.11,30.38 Q30.60,33.20 27.40,33.20 L12.60,33.20 Q9.40,33.20 7.89,30.38 Z" fill="#fff" stroke="#ea8a2e" stroke-width="1.3"/><clipPath id="gc0l"><rect x="0" y="0" width="20" height="34"/></clipPath><path d="M30.7,13.71 L30.98,14.81 L34.0,14.64 L34.0,19.36 L30.98,19.19 L30.7,20.29 L29.9,22.24 L29.31,23.22 L31.57,25.23 L28.23,28.57 L26.22,26.31 L25.24,26.9 L23.29,27.7 L22.19,27.98 L22.36,31.0 L17.64,31.0 L17.81,27.98 L16.71,27.7 L14.76,26.9 L13.78,26.31 L11.77,28.57 L8.43,25.23 L10.69,23.22 L10.1,22.24 L9.3,20.29 L9.02,19.19 L6.0,19.36 L6.0,14.64 L9.02,14.81 L9.3,13.71 L10.1,11.76 L10.69,10.78 L8.43,8.77 L11.77,5.43 L13.78,7.69 L14.76,7.1 L16.71,6.3 L17.81,6.02 L17.64,3.0 L22.36,3.0 L22.19,6.02 L23.29,6.3 L25.24,7.1 L26.22,7.69 L28.23,5.43 L31.57,8.77 L29.31,10.78 L29.9,11.76Z" fill="#f4a131"/><path d="M30.7,13.71 L30.98,14.81 L34.0,14.64 L34.0,19.36 L30.98,19.19 L30.7,20.29 L29.9,22.24 L29.31,23.22 L31.57,25.23 L28.23,28.57 L26.22,26.31 L25.24,26.9 L23.29,27.7 L22.19,27.98 L22.36,31.0 L17.64,31.0 L17.81,27.98 L16.71,27.7 L14.76,26.9 L13.78,26.31 L11.77,28.57 L8.43,25.23 L10.69,23.22 L10.1,22.24 L9.3,20.29 L9.02,19.19 L6.0,19.36 L6.0,14.64 L9.02,14.81 L9.3,13.71 L10.1,11.76 L10.69,10.78 L8.43,8.77 L11.77,5.43 L13.78,7.69 L14.76,7.1 L16.71,6.3 L17.81,6.02 L17.64,3.0 L22.36,3.0 L22.19,6.02 L23.29,6.3 L25.24,7.1 L26.22,7.69 L28.23,5.43 L31.57,8.77 L29.31,10.78 L29.9,11.76Z" fill="#fbb813" clip-path="url(#gc0l)"/><circle cx="20" cy="17" r="7" fill="#fff" stroke="#f29a1a" stroke-width="0.9"/></g></svg><div class="t" style="left:457.2px;width:400px;text-align:center;top:309.11px;font-size:6.57px;line-height:8.6px;color:#ececec;transform:scaleX(0.9346);transform-origin:50% 50%;">Оборудование</div><svg class="r" style="left:691.9px;top:267px;overflow:hidden" width="69.4" height="51.5" viewBox="0 0 69.4 51.5" preserveAspectRatio="none"><rect width="69.4" height="51.5" fill="#727272"/><polygon points="16.75,20.8 96.75,-119.2 106.08,-135.2 124.73,-135.2 134.05,-119.2 54.05,20.8 44.73,36.8 26.08,36.8" fill="#5b5b5b"/><g transform="translate(16.75,4.8) scale(0.9325,0.9412)"><path d="M2.21,19.82 Q0.70,17.00 2.21,14.18 L7.89,3.62 Q9.40,0.80 12.60,0.80 L27.40,0.80 Q30.60,0.80 32.11,3.62 L37.79,14.18 Q39.30,17.00 37.79,19.82 L32.11,30.38 Q30.60,33.20 27.40,33.20 L12.60,33.20 Q9.40,33.20 7.89,30.38 Z" fill="#fff" stroke="#ea8a2e" stroke-width="1.3"/><polygon points="5.5,13.2 20,2.3 20,13.2" fill="#fbb813"/><polygon points="20,2.3 34.5,13.2 20,13.2" fill="#f4a131"/><rect x="11" y="4.5" width="2.6" height="6" fill="#fbb813"/><rect x="7.8" y="12" width="12.2" height="16.3" fill="#fbb813"/><rect x="20" y="12" width="12" height="16.3" fill="#f4a131"/><rect x="11.6" y="16.5" width="6.4" height="11.8" fill="#f4a131"/><rect x="22" y="14.8" width="5.5" height="8.8" fill="#fde6c4"/><rect x="24.5" y="14.8" width="0.5" height="8.8" fill="#fff"/><rect x="22" y="19" width="5.5" height="0.5" fill="#fff"/><rect x="6.5" y="28.3" width="27" height="1.6" fill="#f29a1a"/></g></svg><div class="t" style="left:526.6px;width:400px;text-align:center;top:309.11px;font-size:6.57px;line-height:8.6px;color:#ececec;transform:scaleX(0.9346);transform-origin:50% 50%;">Охраняемый объект</div><svg class="r" style="left:761.3px;top:267px;overflow:hidden" width="69.4" height="51.5" viewBox="0 0 69.4 51.5" preserveAspectRatio="none"><rect width="69.4" height="51.5" fill="#a1a1a1"/><polygon points="16.75,20.8 96.75,-119.2 106.08,-135.2 124.73,-135.2 134.05,-119.2 54.05,20.8 44.73,36.8 26.08,36.8" fill="#8e8e8e"/><g transform="translate(16.75,4.8) scale(0.9325,0.9412)"><path d="M2.21,19.82 Q0.70,17.00 2.21,14.18 L7.89,3.62 Q9.40,0.80 12.60,0.80 L27.40,0.80 Q30.60,0.80 32.11,3.62 L37.79,14.18 Q39.30,17.00 37.79,19.82 L32.11,30.38 Q30.60,33.20 27.40,33.20 L12.60,33.20 Q9.40,33.20 7.89,30.38 Z" fill="#fff" stroke="#ea8a2e" stroke-width="1.3"/><clipPath id="gc2c"><rect x="0" y="0" width="19.5" height="34"/></clipPath><path d="M28.68,10.68 L28.92,11.63 L31.33,11.51 L31.33,15.49 L28.92,15.37 L28.68,16.32 L27.98,17.99 L27.48,18.83 L29.28,20.46 L26.46,23.28 L24.83,21.48 L23.99,21.98 L22.32,22.68 L21.37,22.92 L21.49,25.33 L17.51,25.33 L17.63,22.92 L16.68,22.68 L15.01,21.98 L14.17,21.48 L12.54,23.28 L9.72,20.46 L11.52,18.83 L11.02,17.99 L10.32,16.32 L10.08,15.37 L7.67,15.49 L7.67,11.51 L10.08,11.63 L10.32,10.68 L11.02,9.01 L11.52,8.17 L9.72,6.54 L12.54,3.72 L14.17,5.52 L15.01,5.02 L16.68,4.32 L17.63,4.08 L17.51,1.67 L21.49,1.67 L21.37,4.08 L22.32,4.32 L23.99,5.02 L24.83,5.52 L26.46,3.72 L29.28,6.54 L27.48,8.17 L27.98,9.01Z" fill="#f4a131"/><path d="M28.68,10.68 L28.92,11.63 L31.33,11.51 L31.33,15.49 L28.92,15.37 L28.68,16.32 L27.98,17.99 L27.48,18.83 L29.28,20.46 L26.46,23.28 L24.83,21.48 L23.99,21.98 L22.32,22.68 L21.37,22.92 L21.49,25.33 L17.51,25.33 L17.63,22.92 L16.68,22.68 L15.01,21.98 L14.17,21.48 L12.54,23.28 L9.72,20.46 L11.52,18.83 L11.02,17.99 L10.32,16.32 L10.08,15.37 L7.67,15.49 L7.67,11.51 L10.08,11.63 L10.32,10.68 L11.02,9.01 L11.52,8.17 L9.72,6.54 L12.54,3.72 L14.17,5.52 L15.01,5.02 L16.68,4.32 L17.63,4.08 L17.51,1.67 L21.49,1.67 L21.37,4.08 L22.32,4.32 L23.99,5.02 L24.83,5.52 L26.46,3.72 L29.28,6.54 L27.48,8.17 L27.98,9.01Z" fill="#fbb813" clip-path="url(#gc2c)"/><circle cx="19.5" cy="13.5" r="6.6" fill="#fff"/><path d="M16.8,13 v-2.4 a2.7,2.7 0 0 1 5.4,0 v2.4" fill="none" stroke="#f4a131" stroke-width="1.3"/><rect x="15.2" y="12.6" width="8.6" height="7" rx="0.6" fill="#f4a131"/><rect x="19" y="14.8" width="1" height="2.4" fill="#8a5a20"/><path d="M21.5,27 v-8.6 a1.3,1.3 0 0 1 2.6,0 v4.4 l4.5,0.9 c1.2,0.3 1.8,1 1.8,2.3 v4 c0,2 -1.2,3.3 -3.3,3.3 h-3.3 c-1.3,0 -2.1,-0.6 -2.8,-1.6 l-2.6,-3.6 c-0.6,-0.9 0.4,-1.8 1.3,-1.2 z" fill="#ecd0ac" stroke="#9a8a7a" stroke-width="0.6"/><path d="M26,23.2 v3 M28,23.8 v2.6" stroke="#c8ac8a" stroke-width="0.5"/></g></svg><div class="t" style="left:596.0px;width:400px;text-align:center;top:309.11px;font-size:6.57px;line-height:8.6px;color:#ececec;transform:scaleX(0.9346);transform-origin:50% 50%;">Управление</div><svg class="r" style="left:830.7px;top:267px;overflow:hidden" width="69.4" height="51.5" viewBox="0 0 69.4 51.5" preserveAspectRatio="none"><rect width="69.4" height="51.5" fill="#727272"/><polygon points="16.75,20.8 96.75,-119.2 106.08,-135.2 124.73,-135.2 134.05,-119.2 54.05,20.8 44.73,36.8 26.08,36.8" fill="#5b5b5b"/><g transform="translate(16.75,4.8) scale(0.9325,0.9412)"><path d="M2.21,19.82 Q0.70,17.00 2.21,14.18 L7.89,3.62 Q9.40,0.80 12.60,0.80 L27.40,0.80 Q30.60,0.80 32.11,3.62 L37.79,14.18 Q39.30,17.00 37.79,19.82 L32.11,30.38 Q30.60,33.20 27.40,33.20 L12.60,33.20 Q9.40,33.20 7.89,30.38 Z" fill="#fff" stroke="#ea8a2e" stroke-width="1.3"/><path d="M8.9,29 c0,-4.6 2.6,-7.6 6,-8.2 h10.2 c3.4,0.6 6.2,3.6 6.2,8.2 z" fill="#fbb813"/><path d="M20,20.8 h5.1 c3.4,0.6 6.2,3.6 6.2,8.2 h-11.3 z" fill="#f4a131"/><rect x="17.6" y="18" width="4.8" height="3.6" fill="#f3d2b2"/><ellipse cx="20" cy="13.6" rx="5.6" ry="6.6" fill="#fbe0c8"/><path d="M13.4,13.8 c-0.6,-6.4 2.4,-10 6.6,-10 c4.2,0 7.2,3.6 6.6,10 c-0.4,-2.2 -1,-3.4 -2,-3.8 c-2.6,0.6 -6.6,0.6 -9.2,0 c-1,0.4 -1.6,1.6 -2,3.8 z" fill="#5e5e5e"/></g></svg><div class="t" style="left:665.4px;width:400px;text-align:center;top:309.11px;font-size:6.57px;line-height:8.6px;color:#ececec;transform:scaleX(0.9346);transform-origin:50% 50%;">Персонал</div><svg class="r" style="left:900.1px;top:267px;overflow:hidden" width="69.4" height="51.5" viewBox="0 0 69.4 51.5" preserveAspectRatio="none"><rect width="69.4" height="51.5" fill="#727272"/><polygon points="16.75,20.8 96.75,-119.2 106.08,-135.2 124.73,-135.2 134.05,-119.2 54.05,20.8 44.73,36.8 26.08,36.8" fill="#5b5b5b"/><g transform="translate(16.75,4.8) scale(0.9325,0.9412)"><path d="M2.21,19.82 Q0.70,17.00 2.21,14.18 L7.89,3.62 Q9.40,0.80 12.60,0.80 L27.40,0.80 Q30.60,0.80 32.11,3.62 L37.79,14.18 Q39.30,17.00 37.79,19.82 L32.11,30.38 Q30.60,33.20 27.40,33.20 L12.60,33.20 Q9.40,33.20 7.89,30.38 Z" fill="#fff" stroke="#ea8a2e" stroke-width="1.3"/><rect x="8.2" y="8.2" width="23.6" height="16.6" fill="#fff" stroke="#f7a800" stroke-width="2.8"/><path d="M21.13,15.25 L21.23,15.64 L22.33,15.57 L22.33,17.23 L21.23,17.16 L21.13,17.55 L20.85,18.22 L20.64,18.57 L21.47,19.3 L20.3,20.47 L19.57,19.64 L19.22,19.85 L18.55,20.13 L18.16,20.23 L18.23,21.33 L16.57,21.33 L16.64,20.23 L16.25,20.13 L15.58,19.85 L15.23,19.64 L14.5,20.47 L13.33,19.3 L14.16,18.57 L13.95,18.22 L13.67,17.55 L13.57,17.16 L12.47,17.23 L12.47,15.57 L13.57,15.64 L13.67,15.25 L13.95,14.58 L14.16,14.23 L13.33,13.5 L14.5,12.33 L15.23,13.16 L15.58,12.95 L16.25,12.67 L16.64,12.57 L16.57,11.47 L18.23,11.47 L18.16,12.57 L18.55,12.67 L19.22,12.95 L19.57,13.16 L20.3,12.33 L21.47,13.5 L20.64,14.23 L20.85,14.58Z" fill="#f9ad10"/><circle cx="17.4" cy="16.4" r="2.2" fill="#fff"/><path d="M27.39,18.46 L27.45,18.71 L28.16,18.67 L28.16,19.73 L27.45,19.69 L27.39,19.94 L27.21,20.37 L27.08,20.59 L27.61,21.06 L26.86,21.81 L26.39,21.28 L26.17,21.41 L25.74,21.59 L25.49,21.65 L25.53,22.36 L24.47,22.36 L24.51,21.65 L24.26,21.59 L23.83,21.41 L23.61,21.28 L23.14,21.81 L22.39,21.06 L22.92,20.59 L22.79,20.37 L22.61,19.94 L22.55,19.69 L21.84,19.73 L21.84,18.67 L22.55,18.71 L22.61,18.46 L22.79,18.03 L22.92,17.81 L22.39,17.34 L23.14,16.59 L23.61,17.12 L23.83,16.99 L24.26,16.81 L24.51,16.75 L24.47,16.04 L25.53,16.04 L25.49,16.75 L25.74,16.81 L26.17,16.99 L26.39,17.12 L26.86,16.59 L27.61,17.34 L27.08,17.81 L27.21,18.03Z" fill="#f4a131"/><circle cx="25" cy="19.2" r="1.4" fill="#fff"/><rect x="19" y="26" width="2.2" height="2.2" fill="#f7a800"/><rect x="15" y="28.2" width="10" height="1.4" rx="0.5" fill="#4a4a4a"/></g></svg><div class="t" style="left:734.8px;width:400px;text-align:center;top:309.11px;font-size:6.57px;line-height:8.6px;color:#ececec;transform:scaleX(0.9346);transform-origin:50% 50%;">Рабочие места</div><div class="r" style="left:690.9px;top:267px;width:1.0px;height:51.5px;background:#b4b4b6;"></div><div class="r" style="left:760.3px;top:267px;width:1.0px;height:51.5px;background:#b4b4b6;"></div><div class="r" style="left:829.7px;top:267px;width:1.0px;height:51.5px;background:#b4b4b6;"></div><div class="r" style="left:899.1px;top:267px;width:1.0px;height:51.5px;background:#b4b4b6;"></div><div class="r" style="left:622px;top:318.5px;width:576px;height:8.3px;background:#e9e9ee;border-bottom:1px solid #fbfbfd;"></div><div class="r" style="left:622px;top:326.8px;width:576px;height:1.2px;background:#707070;"></div><div class="r" style="left:622px;top:328px;width:170px;height:295.3px;background:#f5f5fd;border-bottom:1px solid #d0d0d6;"></div><div class="r" style="left:623px;top:443.6px;width:169px;height:8.0px;background:#d3e4f8;"></div><svg class="r" style="left:626.24px;top:333.27px;" width="4.12" height="2.85" viewBox="0 0 5.2 3.6" preserveAspectRatio="none"><polygon points="0,0 5.2,0 2.6,3.2" fill="#404040"/></svg><svg class="r" style="left:635.9px;top:330.8px;" width="7.8" height="7.8" viewBox="0 0 8 8" preserveAspectRatio="none"><path d="M0.8,3.8 c0,-2.2 1.4,-3.4 3.2,-3.4 c1.8,0 3.2,1.2 3.2,3.4 v3.4 h-1.6 v-1 h-3.2 v1 h-1.6z" fill="#1e88d0"/><rect x="2.2" y="2.6" width="3.6" height="1.2" fill="#e8f4fc"/></svg><div class="win" style="left:622px;top:330.20px;width:170px;height:9px"><div class="t" style="left:25.3px;top:0.84px;font-size:6.527px;line-height:8.54px;color:#141414;transform:scaleX(0.9346);transform-origin:0 50%;">[test] Автомобили</div></div><svg class="r" style="left:646.8px;top:339.47px;" width="7.8" height="7.8" viewBox="0 0 8 8" preserveAspectRatio="none"><path d="M1.2,3.5 l1,-2.2 c0.2,-0.4 0.5,-0.6 1,-0.6 h1.6 c0.5,0 0.8,0.2 1,0.6 l1,2.2 c0.5,0.2 0.8,0.6 0.8,1.2 v2.3 h-1.4 v-0.8 h-4.4 v0.8 h-1.4 v-2.3 c0,-0.6 0.3,-1 0.8,-1.2z" fill="#2a9be0"/><rect x="2.4" y="2.2" width="3.2" height="1.1" fill="#d8eefa"/></svg><div class="win" style="left:622px;top:338.87px;width:170px;height:9px"><div class="t" style="left:38.0px;top:0.84px;font-size:6.527px;line-height:8.54px;color:#141414;transform:scaleX(0.9346);transform-origin:0 50%;">Hyndai Solaris M454TR790</div></div><svg class="r" style="left:646.8px;top:348.14px;" width="7.8" height="7.8" viewBox="0 0 8 8" preserveAspectRatio="none"><path d="M1.2,3.5 l1,-2.2 c0.2,-0.4 0.5,-0.6 1,-0.6 h1.6 c0.5,0 0.8,0.2 1,0.6 l1,2.2 c0.5,0.2 0.8,0.6 0.8,1.2 v2.3 h-1.4 v-0.8 h-4.4 v0.8 h-1.4 v-2.3 c0,-0.6 0.3,-1 0.8,-1.2z" fill="#2a9be0"/><rect x="2.4" y="2.2" width="3.2" height="1.1" fill="#d8eefa"/></svg><div class="win" style="left:622px;top:347.54px;width:170px;height:9px"><div class="t" style="left:38.0px;top:0.84px;font-size:6.527px;line-height:8.54px;color:#141414;transform:scaleX(0.9346);transform-origin:0 50%;">VW Polo Sedan  E155AP750</div></div><svg class="r" style="left:626.24px;top:359.28px;" width="4.12" height="2.85" viewBox="0 0 5.2 3.6" preserveAspectRatio="none"><polygon points="0,0 5.2,0 2.6,3.2" fill="#404040"/></svg><svg class="r" style="left:635.9px;top:356.81px;" width="7.8" height="7.8" viewBox="0 0 8 8" preserveAspectRatio="none"><rect x="0.5" y="0.5" width="4.5" height="7" fill="#1060a8"/><rect x="3" y="1.5" width="4.5" height="6" fill="#2a9be0"/><rect x="4" y="2.5" width="0.8" height="0.8" fill="#bfe0f6"/><rect x="5.8" y="2.5" width="0.8" height="0.8" fill="#bfe0f6"/><rect x="4" y="4.5" width="0.8" height="0.8" fill="#bfe0f6"/><rect x="5.8" y="4.5" width="0.8" height="0.8" fill="#bfe0f6"/></svg><div class="win" style="left:622px;top:356.21px;width:170px;height:9px"><div class="t" style="left:25.3px;top:0.84px;font-size:6.527px;line-height:8.54px;color:#141414;transform:scaleX(0.9346);transform-origin:0 50%;">[test] Организации</div></div><svg class="r" style="left:646.8px;top:365.48px;" width="7.8" height="7.8" viewBox="0 0 8 8" preserveAspectRatio="none"><rect x="2" y="0.3" width="4.2" height="7.4" fill="#2a9be0"/><rect x="2.8" y="1.2" width="0.9" height="0.9" fill="#cfe8f8"/><rect x="4.5" y="1.2" width="0.9" height="0.9" fill="#cfe8f8"/><rect x="2.8" y="3.2" width="0.9" height="0.9" fill="#cfe8f8"/><rect x="4.5" y="3.2" width="0.9" height="0.9" fill="#cfe8f8"/><rect x="2.8" y="5.2" width="0.9" height="0.9" fill="#cfe8f8"/><rect x="4.5" y="5.2" width="0.9" height="0.9" fill="#cfe8f8"/></svg><div class="win" style="left:622px;top:364.88px;width:170px;height:9px"><div class="t" style="left:38.0px;top:0.84px;font-size:6.527px;line-height:8.54px;color:#141414;transform:scaleX(0.9346);transform-origin:0 50%;">ЗАО НВП Болид</div></div><svg class="r" style="left:646.8px;top:374.15px;" width="7.8" height="7.8" viewBox="0 0 8 8" preserveAspectRatio="none"><rect x="2" y="0.3" width="4.2" height="7.4" fill="#2a9be0"/><rect x="2.8" y="1.2" width="0.9" height="0.9" fill="#cfe8f8"/><rect x="4.5" y="1.2" width="0.9" height="0.9" fill="#cfe8f8"/><rect x="2.8" y="3.2" width="0.9" height="0.9" fill="#cfe8f8"/><rect x="4.5" y="3.2" width="0.9" height="0.9" fill="#cfe8f8"/><rect x="2.8" y="5.2" width="0.9" height="0.9" fill="#cfe8f8"/><rect x="4.5" y="5.2" width="0.9" height="0.9" fill="#cfe8f8"/></svg><div class="win" style="left:622px;top:373.55px;width:170px;height:9px"><div class="t" style="left:38.0px;top:0.84px;font-size:6.527px;line-height:8.54px;color:#141414;transform:scaleX(0.9346);transform-origin:0 50%;">Обособленное подразделение ЗАО НВП Болид</div></div><svg class="r" style="left:626.24px;top:385.29px;" width="4.12" height="2.85" viewBox="0 0 5.2 3.6" preserveAspectRatio="none"><polygon points="0,0 5.2,0 2.6,3.2" fill="#404040"/></svg><svg class="r" style="left:635.9px;top:382.82px;" width="7.8" height="7.8" viewBox="0 0 8 8" preserveAspectRatio="none"><rect x="0.5" y="2.2" width="7" height="5" rx="0.5" fill="#f08a3a"/><rect x="2.8" y="0.8" width="2.4" height="1.6" fill="none" stroke="#f08a3a" stroke-width="0.7"/><rect x="0.5" y="4" width="7" height="0.6" fill="#fbd0a8"/><rect x="3.4" y="3.6" width="1.2" height="1.4" fill="#fff"/></svg><div class="win" style="left:622px;top:382.22px;width:170px;height:9px"><div class="t" style="left:25.3px;top:0.84px;font-size:6.527px;line-height:8.54px;color:#141414;transform:scaleX(0.9346);transform-origin:0 50%;">[test] Должности</div></div><svg class="r" style="left:646.8px;top:391.49px;" width="7.8" height="7.8" viewBox="0 0 8 8" preserveAspectRatio="none"><rect x="0.5" y="2.2" width="7" height="5" rx="0.5" fill="#f08a3a"/><rect x="2.8" y="0.8" width="2.4" height="1.6" fill="none" stroke="#f08a3a" stroke-width="0.7"/><rect x="0.5" y="4" width="7" height="0.6" fill="#fbd0a8"/><rect x="3.4" y="3.6" width="1.2" height="1.4" fill="#fff"/></svg><div class="win" style="left:622px;top:390.89px;width:170px;height:9px"><div class="t" style="left:38.0px;top:0.84px;font-size:6.527px;line-height:8.54px;color:#141414;transform:scaleX(0.9346);transform-origin:0 50%;">Практикант</div></div><svg class="r" style="left:646.8px;top:400.16px;" width="7.8" height="7.8" viewBox="0 0 8 8" preserveAspectRatio="none"><rect x="0.5" y="2.2" width="7" height="5" rx="0.5" fill="#f08a3a"/><rect x="2.8" y="0.8" width="2.4" height="1.6" fill="none" stroke="#f08a3a" stroke-width="0.7"/><rect x="0.5" y="4" width="7" height="0.6" fill="#fbd0a8"/><rect x="3.4" y="3.6" width="1.2" height="1.4" fill="#fff"/></svg><div class="win" style="left:622px;top:399.56px;width:170px;height:9px"><div class="t" style="left:38.0px;top:0.84px;font-size:6.527px;line-height:8.54px;color:#141414;transform:scaleX(0.9346);transform-origin:0 50%;">Разработчик</div></div><svg class="r" style="left:646.8px;top:408.83px;" width="7.8" height="7.8" viewBox="0 0 8 8" preserveAspectRatio="none"><rect x="0.5" y="2.2" width="7" height="5" rx="0.5" fill="#f08a3a"/><rect x="2.8" y="0.8" width="2.4" height="1.6" fill="none" stroke="#f08a3a" stroke-width="0.7"/><rect x="0.5" y="4" width="7" height="0.6" fill="#fbd0a8"/><rect x="3.4" y="3.6" width="1.2" height="1.4" fill="#fff"/></svg><div class="win" style="left:622px;top:408.23px;width:170px;height:9px"><div class="t" style="left:38.0px;top:0.84px;font-size:6.527px;line-height:8.54px;color:#141414;transform:scaleX(0.9346);transform-origin:0 50%;">Руководитель подразделения</div></div><svg class="r" style="left:646.8px;top:417.5px;" width="7.8" height="7.8" viewBox="0 0 8 8" preserveAspectRatio="none"><rect x="0.5" y="2.2" width="7" height="5" rx="0.5" fill="#f08a3a"/><rect x="2.8" y="0.8" width="2.4" height="1.6" fill="none" stroke="#f08a3a" stroke-width="0.7"/><rect x="0.5" y="4" width="7" height="0.6" fill="#fbd0a8"/><rect x="3.4" y="3.6" width="1.2" height="1.4" fill="#fff"/></svg><div class="win" style="left:622px;top:416.90px;width:170px;height:9px"><div class="t" style="left:38.0px;top:0.84px;font-size:6.527px;line-height:8.54px;color:#141414;transform:scaleX(0.9346);transform-origin:0 50%;">Руководитель сектора</div></div><svg class="r" style="left:646.8px;top:426.17px;" width="7.8" height="7.8" viewBox="0 0 8 8" preserveAspectRatio="none"><rect x="0.5" y="2.2" width="7" height="5" rx="0.5" fill="#f08a3a"/><rect x="2.8" y="0.8" width="2.4" height="1.6" fill="none" stroke="#f08a3a" stroke-width="0.7"/><rect x="0.5" y="4" width="7" height="0.6" fill="#fbd0a8"/><rect x="3.4" y="3.6" width="1.2" height="1.4" fill="#fff"/></svg><div class="win" style="left:622px;top:425.57px;width:170px;height:9px"><div class="t" style="left:38.0px;top:0.84px;font-size:6.527px;line-height:8.54px;color:#141414;transform:scaleX(0.9346);transform-origin:0 50%;">Тестировщик</div></div><svg class="r" style="left:626.24px;top:437.31px;" width="4.12" height="2.85" viewBox="0 0 5.2 3.6" preserveAspectRatio="none"><polygon points="0,0 5.2,0 2.6,3.2" fill="#404040"/></svg><svg class="r" style="left:635.9px;top:434.84px;" width="7.8" height="7.8" viewBox="0 0 8 8" preserveAspectRatio="none"><rect x="0.5" y="2.2" width="7" height="5" rx="0.5" fill="#f08a3a"/><rect x="2.8" y="0.8" width="2.4" height="1.6" fill="none" stroke="#f08a3a" stroke-width="0.7"/><circle cx="6.2" cy="4.5" r="1.5" fill="#333"/><path d="M5.5,5.5 L3,8" stroke="#333" stroke-width="1"/></svg><div class="win" style="left:622px;top:434.24px;width:170px;height:9px"><div class="t" style="left:25.3px;top:0.84px;font-size:6.527px;line-height:8.54px;color:#141414;transform:scaleX(0.9346);transform-origin:0 50%;">[test] Полномочия персонала</div></div><svg class="r" style="left:646.8px;top:443.51px;" width="7.8" height="7.8" viewBox="0 0 8 8" preserveAspectRatio="none"><circle cx="5.6" cy="2.6" r="2" fill="none" stroke="#4a5a6a" stroke-width="1.1"/><path d="M4.3,4 L0.8,7.5 M1.8,6.5 L2.8,7.4" stroke="#4a5a6a" stroke-width="1.1"/></svg><div class="win" style="left:622px;top:442.91px;width:170px;height:9px"><div class="t" style="left:38.0px;top:0.84px;font-size:6.527px;line-height:8.54px;color:#141414;transform:scaleX(0.9346);transform-origin:0 50%;">Полномочия оператора</div></div><div class="r" style="left:622px;top:616px;width:170px;height:7.3px;background:#fbfbfb;border-top:1px solid #e0e0e4;"></div><svg class="r" style="left:624.8px;top:617.8px;" width="2.4" height="4" viewBox="0 0 2.4 4" preserveAspectRatio="none"><polygon points="2.4,0 2.4,4 0,2" fill="#333"/></svg><div class="r" style="left:775px;top:616.6px;width:10.8px;height:6.7px;background:#e1e1e5;border-left:1px solid #d6d6da;"></div><svg class="r" style="left:787.8px;top:617.8px;" width="2.4" height="4" viewBox="0 0 2.4 4" preserveAspectRatio="none"><polygon points="0,0 0,4 2.4,2" fill="#333"/></svg><div class="r" style="left:792px;top:328px;width:4px;height:295.3px;background:#cacacf;"></div><div class="r" style="left:793px;top:328px;width:2px;height:295.3px;background:#acacb2;"></div><div class="t" style="left:626px;top:627.02px;font-size:6.741px;line-height:8.82px;color:#141414;transform:scaleX(0.9346);transform-origin:0 50%;">OK</div><div class="r" style="left:796px;top:328px;width:402px;height:19.2px;background:#f0f0f5;border-bottom:1px solid #dcdce2;"></div><div class="r" style="left:800.8px;top:330.6px;width:376.5px;height:15.8px;background:#f7f7fd;border:1px solid #dcdce4;"></div><div class="t" style="left:802.2px;top:331.35px;font-size:9.899px;line-height:14.59px;color:#111;font-weight:bold;transform:scaleX(1.0526);transform-origin:0 50%;">Полномочия оператора</div><svg class="r" style="left:1165.8px;top:334.6px;" width="7.4" height="7.4" viewBox="0 0 10 10" preserveAspectRatio="none"><circle cx="5" cy="5" r="5" fill="#4a4a4a"/><path d="M3.1,3.1 L6.9,6.9 M6.9,3.1 L3.1,6.9" stroke="#f0f0f0" stroke-width="1.6"/></svg><svg class="r" style="left:1181.8px;top:331.5px;" width="14.4" height="14.4" viewBox="0 0 20 20" preserveAspectRatio="none"><circle cx="10" cy="10" r="10" fill="#f2a11a"/><path d="M10.6,4.2 L4.4,10 L10.6,15.8 L10.6,12.3 L16.2,12.3 L16.2,7.7 L10.6,7.7 Z" fill="#fff" stroke="#fff" stroke-width="0.6" stroke-linejoin="round"/></svg><div class="r" style="left:1190.4px;top:348px;width:7.4px;height:250px;background:#fbfbfd;border-left:1px solid #dcdce2;"></div><svg class="r" style="left:1192.1px;top:350.4px;" width="4" height="2.4" viewBox="0 0 4 2.4" preserveAspectRatio="none"><polygon points="0,2.4 4,2.4 2,0" fill="#333"/></svg><div class="r" style="left:1190.8px;top:587.5px;width:7.0px;height:4.5px;background:#dedee2;"></div><div class="r" style="left:1190.4px;top:592px;width:7.4px;height:6px;background:#fbfbfd;border-left:1px solid #dcdce2;border-top:1px solid #e0e0e4;"></div><svg class="r" style="left:1192.1px;top:594px;" width="4" height="2.4" viewBox="0 0 4 2.4" preserveAspectRatio="none"><polygon points="0,0 4,0 2,2.4" fill="#333"/></svg><div class="r" style="left:800.6px;top:364.5px;width:383.8px;height:231.7px;background:#fbfbfd;border:1px solid #d0d0d6;"></div><div class="r" style="left:875px;top:355px;width:73px;height:9.8px;background:linear-gradient(#f4f4f6,#e2e2e6);border:1px solid #c9c9cf;border-bottom:none;"></div><div class="t" style="left:711.5px;width:400px;text-align:center;top:356.6px;font-size:6.42px;line-height:8.4px;color:#141414;transform:scaleX(0.9346);transform-origin:50% 50%;">Просмотр/Управление</div><div class="r" style="left:800.6px;top:353px;width:74.0px;height:12.4px;background:#fbfbfd;border:1px solid #c9c9cf;border-bottom:none;"></div><div class="t" style="left:637.6px;width:400px;text-align:center;top:355.2px;font-size:6.42px;line-height:8.4px;color:#111;transform:scaleX(0.9346);transform-origin:50% 50%;">Работа с программой</div><div class="r" style="left:807.2px;top:371.4px;width:370.6px;height:217.8px;background:#f5f5fd;border:1px solid #d6d6dc;"></div><div class="win" style="left:808.2px;top:372.4px;width:362.4px;height:215.8px"><div class="r" style="left:-808.2px;top:-372.4px;width:1200px;height:640px"><svg class="r" style="left:820.1px;top:373.5px;" width="13.8" height="13.8" viewBox="0 0 14 14" preserveAspectRatio="none"><defs><linearGradient id="shg" x1="0" y1="0" x2="1" y2="1"><stop offset="0" stop-color="#3ea6ee"/><stop offset="1" stop-color="#0f5cb0"/></linearGradient></defs><rect x="0" y="0" width="14" height="14" rx="0.8" fill="url(#shg)"/><path d="M5.5,2.6 A4.6,4.6 0 1 1 3.2,10.6" stroke="#fff" stroke-width="1.1" fill="none"/><rect x="2.2" y="6.2" width="6.5" height="1.3" fill="#e8f4fc"/><rect x="2.5" y="3" width="1.8" height="1.2" fill="#e8f4fc" opacity="0.8"/></svg><div class="t" style="left:836.8px;top:376.11px;font-size:7.661px;line-height:10.02px;color:#141414;transform:scaleX(0.9346);transform-origin:0 50%;">Режим оболочки</div><div class="r" style="left:1061.3px;top:374.4px;width:103.1px;height:12.0px;background:linear-gradient(#fbfbfc,#eaeaee);border:1px solid #c6c6cc;border-radius:2px;"></div><svg class="r" style="left:1064.2px;top:375.9px;" width="9.0" height="9.0" viewBox="0 0 10 10" preserveAspectRatio="none"><circle cx="5" cy="5" r="3.9" fill="none" stroke="#e2252b" stroke-width="1.25"/><path d="M7.6,2.4 L2.4,7.6" stroke="#e2252b" stroke-width="1.25"/></svg><div class="t" style="left:1075px;top:376.47px;font-size:7.019px;line-height:9.18px;color:#141414;transform:scaleX(0.9346);transform-origin:0 50%;">Ограниченный</div><svg class="r" style="left:1155.8px;top:379.2px;" width="4" height="2.6" viewBox="0 0 4 2.6" preserveAspectRatio="none"><polygon points="0,0 4,0 2,2.6" fill="#333"/></svg><svg class="r" style="left:820.1px;top:390.85px;" width="13.8" height="13.8" viewBox="0 0 14 14" preserveAspectRatio="none"><circle cx="7" cy="7" r="4.7" fill="#e5141c"/><path d="M4.8,6.2 a2.3,2.3 0 1 0 4.4,0" stroke="#fff" stroke-width="0.9" fill="none"/><path d="M5.2,5.6 h3.6" stroke="#fff" stroke-width="0.8"/></svg><div class="t" style="left:836.8px;top:393.46px;font-size:7.661px;line-height:10.02px;color:#141414;transform:scaleX(0.9346);transform-origin:0 50%;">Выход из системы</div><div class="r" style="left:1061.3px;top:391.75px;width:103.1px;height:12.0px;background:linear-gradient(#fbfbfc,#eaeaee);border:1px solid #c6c6cc;border-radius:2px;"></div><svg class="r" style="left:1064.2px;top:393.25px;" width="9.0" height="9.0" viewBox="0 0 10 10" preserveAspectRatio="none"><circle cx="5" cy="5" r="3.9" fill="none" stroke="#e2252b" stroke-width="1.25"/><path d="M7.6,2.4 L2.4,7.6" stroke="#e2252b" stroke-width="1.25"/></svg><div class="t" style="left:1075px;top:393.82px;font-size:7.019px;line-height:9.18px;color:#141414;transform:scaleX(0.9346);transform-origin:0 50%;">Выход запрещён</div><svg class="r" style="left:1155.8px;top:396.55px;" width="4" height="2.6" viewBox="0 0 4 2.6" preserveAspectRatio="none"><polygon points="0,0 4,0 2,2.6" fill="#333"/></svg><svg class="r" style="left:811.24px;top:413.67px;" width="4.12" height="2.85" viewBox="0 0 5.2 3.6" preserveAspectRatio="none"><polygon points="0,0 5.2,0 2.6,3.2" fill="#404040"/></svg><svg class="r" style="left:820.1px;top:408.2px;" width="13.8" height="13.8" viewBox="0 0 14 14" preserveAspectRatio="none"><path d="M2,12.5 c-0.9,-0.9 -0.7,-1.8 0.2,-2.5 l6,-5 l1.2,1.2 l-5,6 c-0.7,0.9 -1.6,1.1 -2.4,0.3z" fill="#f7a81b"/><path d="M8.8,5.2 l2.6,-2.6 c0.5,-0.5 1.1,-0.4 1.5,0 c0.4,0.5 0.3,1 -0.2,1.4 l-2.6,2.4z" fill="#f7a81b"/><path d="M1.2,1.6 c1.2,-0.7 2.7,-0.6 3.6,0.3 c0.8,0.8 1,1.9 0.7,2.8 l7.2,7.2 c0.5,0.5 0.5,1.2 0,1.6 c-0.5,0.5 -1.2,0.5 -1.6,0 l-7.2,-7.2 c-1,0.3 -2.1,0.1 -2.8,-0.7 c-0.9,-0.9 -1,-2.4 -0.3,-3.6 l1.9,1.9 l1.4,-0.4 l0.4,-1.4z" fill="#2a9be0"/><path d="M2,12.5 c-0.9,-0.9 -0.7,-1.8 0.2,-2.5 l6,-5 l1.2,1.2 l-5,6 c-0.7,0.9 -1.6,1.1 -2.4,0.3z" fill="#f7a81b"/></svg><div class="t" style="left:836.8px;top:410.81px;font-size:7.661px;line-height:10.02px;color:#141414;transform:scaleX(0.9346);transform-origin:0 50%;">Менеджер конфигурации</div><div class="r" style="left:1061.3px;top:409.1px;width:103.1px;height:12.0px;background:linear-gradient(#fbfbfc,#eaeaee);border:1px solid #c6c6cc;border-radius:2px;"></div><svg class="r" style="left:1064.2px;top:410.6px;" width="9.0" height="9.0" viewBox="0 0 10 10" preserveAspectRatio="none"><circle cx="5" cy="5" r="4.2" fill="#1eae3c"/><path d="M2.9,5.1 L4.4,6.6 L7.1,3.6" stroke="#fff" stroke-width="1.1" fill="none"/></svg><div class="t" style="left:1075px;top:411.17px;font-size:7.019px;line-height:9.18px;color:#141414;transform:scaleX(0.9346);transform-origin:0 50%;">Запуск разрешен</div><svg class="r" style="left:1155.8px;top:413.9px;" width="4" height="2.6" viewBox="0 0 4 2.6" preserveAspectRatio="none"><polygon points="0,0 4,0 2,2.6" fill="#333"/></svg><svg class="r" style="left:831.85px;top:426.7px;" width="11.5" height="11.5" viewBox="0 0 14 14" preserveAspectRatio="none"><path d="M11.87,5.5 L11.98,5.91 L13.69,5.76 L13.69,8.24 L11.98,8.09 L11.87,8.5 L11.51,9.39 L11.3,9.75 L12.61,10.85 L10.85,12.61 L9.75,11.3 L9.39,11.51 L8.5,11.87 L8.09,11.98 L8.24,13.69 L5.76,13.69 L5.91,11.98 L5.5,11.87 L4.61,11.51 L4.25,11.3 L3.15,12.61 L1.39,10.85 L2.7,9.75 L2.49,9.39 L2.13,8.5 L2.02,8.09 L0.31,8.24 L0.31,5.76 L2.02,5.91 L2.13,5.5 L2.49,4.61 L2.7,4.25 L1.39,3.15 L3.15,1.39 L4.25,2.7 L4.61,2.49 L5.5,2.13 L5.91,2.02 L5.76,0.31 L8.24,0.31 L8.09,2.02 L8.5,2.13 L9.39,2.49 L9.75,2.7 L10.85,1.39 L12.61,3.15 L11.3,4.25 L11.51,4.61Z" fill="#f7a81b"/><circle cx="7" cy="7" r="2.7" fill="#fff"/></svg><div class="t" style="left:847.8px;top:428.16px;font-size:7.661px;line-height:10.02px;color:#141414;transform:scaleX(0.9346);transform-origin:0 50%;">Вкладка 'Оборудование'</div><div class="r" style="left:1061.3px;top:426.45px;width:103.1px;height:12.0px;background:linear-gradient(#fbfbfc,#eaeaee);border:1px solid #c6c6cc;border-radius:2px;"></div><svg class="r" style="left:1064.2px;top:427.95px;" width="9.0" height="9.0" viewBox="0 0 10 10" preserveAspectRatio="none"><rect x="3" y="1" width="4.2" height="8" fill="#a8d6f6" stroke="#6cb0e0" stroke-width="0.5"/></svg><div class="t" style="left:1075px;top:428.52px;font-size:7.019px;line-height:9.18px;color:#141414;transform:scaleX(0.9346);transform-origin:0 50%;">Только чтение</div><svg class="r" style="left:1155.8px;top:431.25px;" width="4" height="2.6" viewBox="0 0 4 2.6" preserveAspectRatio="none"><polygon points="0,0 4,0 2,2.6" fill="#333"/></svg><svg class="r" style="left:831.85px;top:444.05px;" width="11.5" height="11.5" viewBox="0 0 14 14" preserveAspectRatio="none"><polygon points="1.5,6 7,0.8 12.5,6 12.5,13.2 1.5,13.2" fill="#f8b516"/><rect x="3" y="1.5" width="1.6" height="3" fill="#f8b516"/><polygon points="7,0.8 12.5,6 12.5,13.2 7,13.2" fill="#f29b2f"/><rect x="3.5" y="8" width="3" height="5.2" fill="#f29b2f"/><rect x="8.3" y="7" width="2.6" height="3.6" fill="#fde8c6"/><rect x="1" y="12.6" width="12" height="0.8" fill="#ea8a2e"/></svg><div class="t" style="left:847.8px;top:445.51px;font-size:7.661px;line-height:10.02px;color:#141414;transform:scaleX(0.9346);transform-origin:0 50%;">Вкладка 'Охраняемый объект'</div><div class="r" style="left:1061.3px;top:443.8px;width:103.1px;height:12.0px;background:linear-gradient(#fbfbfc,#eaeaee);border:1px solid #c6c6cc;border-radius:2px;"></div><svg class="r" style="left:1064.2px;top:445.3px;" width="9.0" height="9.0" viewBox="0 0 10 10" preserveAspectRatio="none"><rect x="3" y="1" width="4.2" height="8" fill="#a8d6f6" stroke="#6cb0e0" stroke-width="0.5"/></svg><div class="t" style="left:1075px;top:445.87px;font-size:7.019px;line-height:9.18px;color:#141414;transform:scaleX(0.9346);transform-origin:0 50%;">Только чтение</div><svg class="r" style="left:1155.8px;top:448.6px;" width="4" height="2.6" viewBox="0 0 4 2.6" preserveAspectRatio="none"><polygon points="0,0 4,0 2,2.6" fill="#333"/></svg><svg class="r" style="left:831.85px;top:461.4px;" width="11.5" height="11.5" viewBox="0 0 14 14" preserveAspectRatio="none"><path d="M10.61,4.74 L10.73,5.24 L11.94,5.18 L11.94,6.82 L10.73,6.76 L10.61,7.26 L10.3,8.01 L10.03,8.46 L10.93,9.26 L9.76,10.43 L8.96,9.53 L8.51,9.8 L7.76,10.11 L7.26,10.23 L7.32,11.44 L5.68,11.44 L5.74,10.23 L5.24,10.11 L4.49,9.8 L4.04,9.53 L3.24,10.43 L2.07,9.26 L2.97,8.46 L2.7,8.01 L2.39,7.26 L2.27,6.76 L1.06,6.82 L1.06,5.18 L2.27,5.24 L2.39,4.74 L2.7,3.99 L2.97,3.54 L2.07,2.74 L3.24,1.57 L4.04,2.47 L4.49,2.2 L5.24,1.89 L5.74,1.77 L5.68,0.56 L7.32,0.56 L7.26,1.77 L7.76,1.89 L8.51,2.2 L8.96,2.47 L9.76,1.57 L10.93,2.74 L10.03,3.54 L10.3,3.99Z" fill="#f8b516"/><circle cx="6.5" cy="6" r="2.3" fill="#fff"/><rect x="5" y="5.5" width="3" height="2.5" fill="#f29b2f"/><path d="M8.5,8 v4.5 h4 v-3 c0,-0.8 -1.5,-1 -2.5,-1.2 v-1.5z" fill="#e3c29c"/></svg><div class="t" style="left:847.8px;top:462.86px;font-size:7.661px;line-height:10.02px;color:#141414;transform:scaleX(0.9346);transform-origin:0 50%;">Вкладка 'Управление'</div><div class="r" style="left:1061.3px;top:461.15px;width:103.1px;height:12.0px;background:linear-gradient(#fbfbfc,#eaeaee);border:1px solid #c6c6cc;border-radius:2px;"></div><svg class="r" style="left:1064.2px;top:462.65px;" width="9.0" height="9.0" viewBox="0 0 10 10" preserveAspectRatio="none"><rect x="3" y="1" width="4.2" height="8" fill="#a8d6f6" stroke="#6cb0e0" stroke-width="0.5"/></svg><div class="t" style="left:1075px;top:463.22px;font-size:7.019px;line-height:9.18px;color:#141414;transform:scaleX(0.9346);transform-origin:0 50%;">Только чтение</div><svg class="r" style="left:1155.8px;top:465.95px;" width="4" height="2.6" viewBox="0 0 4 2.6" preserveAspectRatio="none"><polygon points="0,0 4,0 2,2.6" fill="#333"/></svg><svg class="r" style="left:831.85px;top:478.75px;" width="11.5" height="11.5" viewBox="0 0 14 14" preserveAspectRatio="none"><circle cx="7" cy="4.5" r="3" fill="#fbdcc2"/><path d="M4,4 c0,-2.5 1.3,-3.5 3,-3.5 c1.7,0 3,1 3,3.5 c-0.6,-1.2 -1.5,-1.5 -3,-1.5 c-1.5,0 -2.4,0.3 -3,1.5z" fill="#5a5a5a"/><path d="M1.5,13 c0,-3 2,-5 5.5,-5 c3.5,0 5.5,2 5.5,5z" fill="#f8b516"/><path d="M7,8 c3.5,0 5.5,2 5.5,5 h-5.5z" fill="#f29b2f"/></svg><div class="t" style="left:847.8px;top:480.21px;font-size:7.661px;line-height:10.02px;color:#141414;transform:scaleX(0.9346);transform-origin:0 50%;">Вкладка 'Персонал'</div><div class="r" style="left:1061.3px;top:478.5px;width:103.1px;height:12.0px;background:linear-gradient(#fbfbfc,#eaeaee);border:1px solid #c6c6cc;border-radius:2px;"></div><svg class="r" style="left:1064.2px;top:480.0px;" width="9.0" height="9.0" viewBox="0 0 10 10" preserveAspectRatio="none"><path d="M3.4,4.6 v-1.4 a1.6,1.6 0 0 1 3.2,0 v1.4" stroke="#e0242a" stroke-width="1" fill="none"/><rect x="2.4" y="4.5" width="5.2" height="4.6" fill="#e0242a"/></svg><div class="t" style="left:1075px;top:480.57px;font-size:7.019px;line-height:9.18px;color:#141414;transform:scaleX(0.9346);transform-origin:0 50%;">Заблокировано</div><svg class="r" style="left:1155.8px;top:483.3px;" width="4" height="2.6" viewBox="0 0 4 2.6" preserveAspectRatio="none"><polygon points="0,0 4,0 2,2.6" fill="#333"/></svg><svg class="r" style="left:831.85px;top:496.1px;" width="11.5" height="11.5" viewBox="0 0 14 14" preserveAspectRatio="none"><rect x="1" y="2.5" width="12" height="8" fill="#fff" stroke="#f5a300" stroke-width="1.4"/><circle cx="5" cy="6.2" r="1.6" fill="none" stroke="#f5a300" stroke-width="0.9"/><circle cx="8.5" cy="7.2" r="1" fill="none" stroke="#f5a300" stroke-width="0.7"/><rect x="5" y="11.2" width="4" height="1" fill="#888"/></svg><div class="t" style="left:847.8px;top:497.56px;font-size:7.661px;line-height:10.02px;color:#141414;transform:scaleX(0.9346);transform-origin:0 50%;">Вкладка 'Рабочие места'</div><div class="r" style="left:1061.3px;top:495.85px;width:103.1px;height:12.0px;background:linear-gradient(#fbfbfc,#eaeaee);border:1px solid #c6c6cc;border-radius:2px;"></div><svg class="r" style="left:1064.2px;top:497.35px;" width="9.0" height="9.0" viewBox="0 0 10 10" preserveAspectRatio="none"><path d="M3.4,4.6 v-1.4 a1.6,1.6 0 0 1 3.2,0 v1.4" stroke="#e0242a" stroke-width="1" fill="none"/><rect x="2.4" y="4.5" width="5.2" height="4.6" fill="#e0242a"/></svg><div class="t" style="left:1075px;top:497.92px;font-size:7.019px;line-height:9.18px;color:#141414;transform:scaleX(0.9346);transform-origin:0 50%;">Заблокировано</div><svg class="r" style="left:1155.8px;top:500.65px;" width="4" height="2.6" viewBox="0 0 4 2.6" preserveAspectRatio="none"><polygon points="0,0 4,0 2,2.6" fill="#333"/></svg><svg class="r" style="left:820.1px;top:512.3px;" width="13.8" height="13.8" viewBox="0 0 14 14" preserveAspectRatio="none"><rect x="0.5" y="0.5" width="13" height="13" rx="1" fill="#d8d8de" stroke="#9a9aa2" stroke-width="0.6"/><rect x="1" y="1" width="12" height="2.5" fill="#b8b8c0"/><circle cx="5" cy="9" r="3" fill="#2a7fd0"/><path d="M5,9 L5,6 A3,3 0 0 1 8,9z" fill="#e04040"/><rect x="9.5" y="7" width="1.2" height="5" fill="#e04040"/><rect x="11.2" y="9" width="1.2" height="3" fill="#2a7fd0"/></svg><div class="t" style="left:836.8px;top:514.91px;font-size:7.661px;line-height:10.02px;color:#141414;transform:scaleX(0.9346);transform-origin:0 50%;">Сервис отчетов</div><div class="r" style="left:1061.3px;top:513.2px;width:103.1px;height:12.0px;background:linear-gradient(#fbfbfc,#eaeaee);border:1px solid #c6c6cc;border-radius:2px;"></div><svg class="r" style="left:1064.2px;top:514.7px;" width="9.0" height="9.0" viewBox="0 0 10 10" preserveAspectRatio="none"><circle cx="5" cy="5" r="4.2" fill="#1eae3c"/><path d="M2.9,5.1 L4.4,6.6 L7.1,3.6" stroke="#fff" stroke-width="1.1" fill="none"/></svg><div class="t" style="left:1075px;top:515.27px;font-size:7.019px;line-height:9.18px;color:#141414;transform:scaleX(0.9346);transform-origin:0 50%;">Запуск разрешен</div><svg class="r" style="left:1155.8px;top:518.0px;" width="4" height="2.6" viewBox="0 0 4 2.6" preserveAspectRatio="none"><polygon points="0,0 4,0 2,2.6" fill="#333"/></svg><svg class="r" style="left:811.24px;top:535.12px;" width="4.12" height="2.85" viewBox="0 0 5.2 3.6" preserveAspectRatio="none"><polygon points="0,0 5.2,0 2.6,3.2" fill="#404040"/></svg><svg class="r" style="left:820.1px;top:529.65px;" width="13.8" height="13.8" viewBox="0 0 14 14" preserveAspectRatio="none"><rect x="0.5" y="0.5" width="8.5" height="6.5" fill="#2a8fe0"/><rect x="4" y="4.5" width="9.5" height="7" fill="#1fbf45" stroke="#158a30" stroke-width="0.5"/><rect x="7.5" y="11.5" width="2.5" height="1" fill="#333"/><rect x="6.5" y="12.5" width="4.5" height="0.8" fill="#333"/></svg><div class="t" style="left:836.8px;top:532.26px;font-size:7.661px;line-height:10.02px;color:#141414;transform:scaleX(0.9346);transform-origin:0 50%;">Рабочие места</div><svg class="r" style="left:831.85px;top:548.15px;" width="11.5" height="11.5" viewBox="0 0 14 14" preserveAspectRatio="none"><rect x="0.5" y="1.5" width="13" height="9" fill="#1fbf45" stroke="#16963a" stroke-width="0.5"/><rect x="6" y="10.5" width="2" height="1.5" fill="#333"/><rect x="4" y="12" width="6" height="0.9" fill="#333"/></svg><div class="t" style="left:847.8px;top:549.61px;font-size:7.661px;line-height:10.02px;color:#141414;transform:scaleX(0.9346);transform-origin:0 50%;">Рабочее место администратора</div><div class="r" style="left:1061.3px;top:547.9px;width:103.1px;height:12.0px;background:linear-gradient(#fbfbfc,#eaeaee);border:1px solid #c6c6cc;border-radius:2px;"></div><svg class="r" style="left:1064.2px;top:549.4px;" width="9.0" height="9.0" viewBox="0 0 10 10" preserveAspectRatio="none"><circle cx="5" cy="5" r="3.9" fill="none" stroke="#e2252b" stroke-width="1.25"/><path d="M7.6,2.4 L2.4,7.6" stroke="#e2252b" stroke-width="1.25"/></svg><div class="t" style="left:1075px;top:549.97px;font-size:7.019px;line-height:9.18px;color:#141414;transform:scaleX(0.9346);transform-origin:0 50%;">Запуск запрещён</div><svg class="r" style="left:1155.8px;top:552.7px;" width="4" height="2.6" viewBox="0 0 4 2.6" preserveAspectRatio="none"><polygon points="0,0 4,0 2,2.6" fill="#333"/></svg><svg class="r" style="left:831.85px;top:565.5px;" width="11.5" height="11.5" viewBox="0 0 14 14" preserveAspectRatio="none"><rect x="0.5" y="1.5" width="13" height="9" fill="#1fbf45" stroke="#16963a" stroke-width="0.5"/><rect x="6" y="10.5" width="2" height="1.5" fill="#333"/><rect x="4" y="12" width="6" height="0.9" fill="#333"/></svg><div class="t" style="left:847.8px;top:566.96px;font-size:7.661px;line-height:10.02px;color:#141414;transform:scaleX(0.9346);transform-origin:0 50%;">Рабочее место (оператор)</div><div class="r" style="left:1061.3px;top:565.25px;width:103.1px;height:12.0px;background:linear-gradient(#fbfbfc,#eaeaee);border:1px solid #c6c6cc;border-radius:2px;"></div><svg class="r" style="left:1064.2px;top:566.75px;" width="9.0" height="9.0" viewBox="0 0 10 10" preserveAspectRatio="none"><circle cx="5" cy="5" r="4.2" fill="#1eae3c"/><path d="M2.9,5.1 L4.4,6.6 L7.1,3.6" stroke="#fff" stroke-width="1.1" fill="none"/></svg><div class="t" style="left:1075px;top:567.32px;font-size:7.019px;line-height:9.18px;color:#141414;transform:scaleX(0.9346);transform-origin:0 50%;">Запуск разрешен</div><svg class="r" style="left:1155.8px;top:570.05px;" width="4" height="2.6" viewBox="0 0 4 2.6" preserveAspectRatio="none"><polygon points="0,0 4,0 2,2.6" fill="#333"/></svg><svg class="r" style="left:831.85px;top:582.85px;" width="11.5" height="11.5" viewBox="0 0 14 14" preserveAspectRatio="none"><rect x="0.5" y="1.5" width="13" height="9" fill="#1fbf45" stroke="#16963a" stroke-width="0.5"/><rect x="6" y="10.5" width="2" height="1.5" fill="#333"/><rect x="4" y="12" width="6" height="0.9" fill="#333"/></svg><div class="t" style="left:847.8px;top:584.31px;font-size:7.661px;line-height:10.02px;color:#141414;transform:scaleX(0.9346);transform-origin:0 50%;">Рабочее место</div><div class="r" style="left:1061.3px;top:582.6px;width:103.1px;height:12.0px;background:linear-gradient(#fbfbfc,#eaeaee);border:1px solid #c6c6cc;border-radius:2px;"></div><svg class="r" style="left:1064.2px;top:584.1px;" width="9.0" height="9.0" viewBox="0 0 10 10" preserveAspectRatio="none"><circle cx="5" cy="5" r="3.9" fill="none" stroke="#e2252b" stroke-width="1.25"/><path d="M7.6,2.4 L2.4,7.6" stroke="#e2252b" stroke-width="1.25"/></svg><div class="t" style="left:1075px;top:584.67px;font-size:7.019px;line-height:9.18px;color:#141414;transform:scaleX(0.9346);transform-origin:0 50%;">Запуск запрещён</div><svg class="r" style="left:1155.8px;top:587.4px;" width="4" height="2.6" viewBox="0 0 4 2.6" preserveAspectRatio="none"><polygon points="0,0 4,0 2,2.6" fill="#333"/></svg></div></div><div class="r" style="left:1170.6px;top:372.4px;width:6.4px;height:215.8px;background:#fbfbfd;border-left:1px solid #e0e0e4;"></div><div class="r" style="left:1171px;top:541px;width:6.8px;height:41px;background:#dcdce0;"></div><svg class="r" style="left:1171.8px;top:374.8px;" width="4" height="2.4" viewBox="0 0 4 2.4" preserveAspectRatio="none"><polygon points="0,2.4 4,2.4 2,0" fill="#333"/></svg><div class="r" style="left:1170.6px;top:582px;width:7.2px;height:6.2px;background:#fbfbfd;border-left:1px solid #e0e0e4;"></div><svg class="r" style="left:1172px;top:584px;" width="4" height="2.4" viewBox="0 0 4 2.4" preserveAspectRatio="none"><polygon points="0,0 4,0 2,2.4" fill="#333"/></svg><div class="r" style="left:796px;top:597.8px;width:394.6px;height:0.8px;background:#d4d4da;"></div><div class="r" style="left:800.2px;top:601.9px;width:69.1px;height:17.7px;background:linear-gradient(#fbfbfc,#e8e8ec);border:1px solid #c6c6cb;border-radius:2px;"></div><div class="t" style="left:634.75px;width:400px;text-align:center;top:606.91px;font-size:6.848px;line-height:8.96px;color:#141414;letter-spacing:0.25px;transform:scaleX(0.9346);transform-origin:50% 50%;">Применить</div><div class="r" style="left:873.3px;top:601.9px;width:69.0px;height:17.7px;background:linear-gradient(#fbfbfc,#e8e8ec);border:1px solid #c6c6cb;border-radius:2px;"></div><div class="t" style="left:707.8px;width:400px;text-align:center;top:606.91px;font-size:6.848px;line-height:8.96px;color:#141414;letter-spacing:0.25px;transform:scaleX(0.9346);transform-origin:50% 50%;">Отмена</div></div></body></html>
